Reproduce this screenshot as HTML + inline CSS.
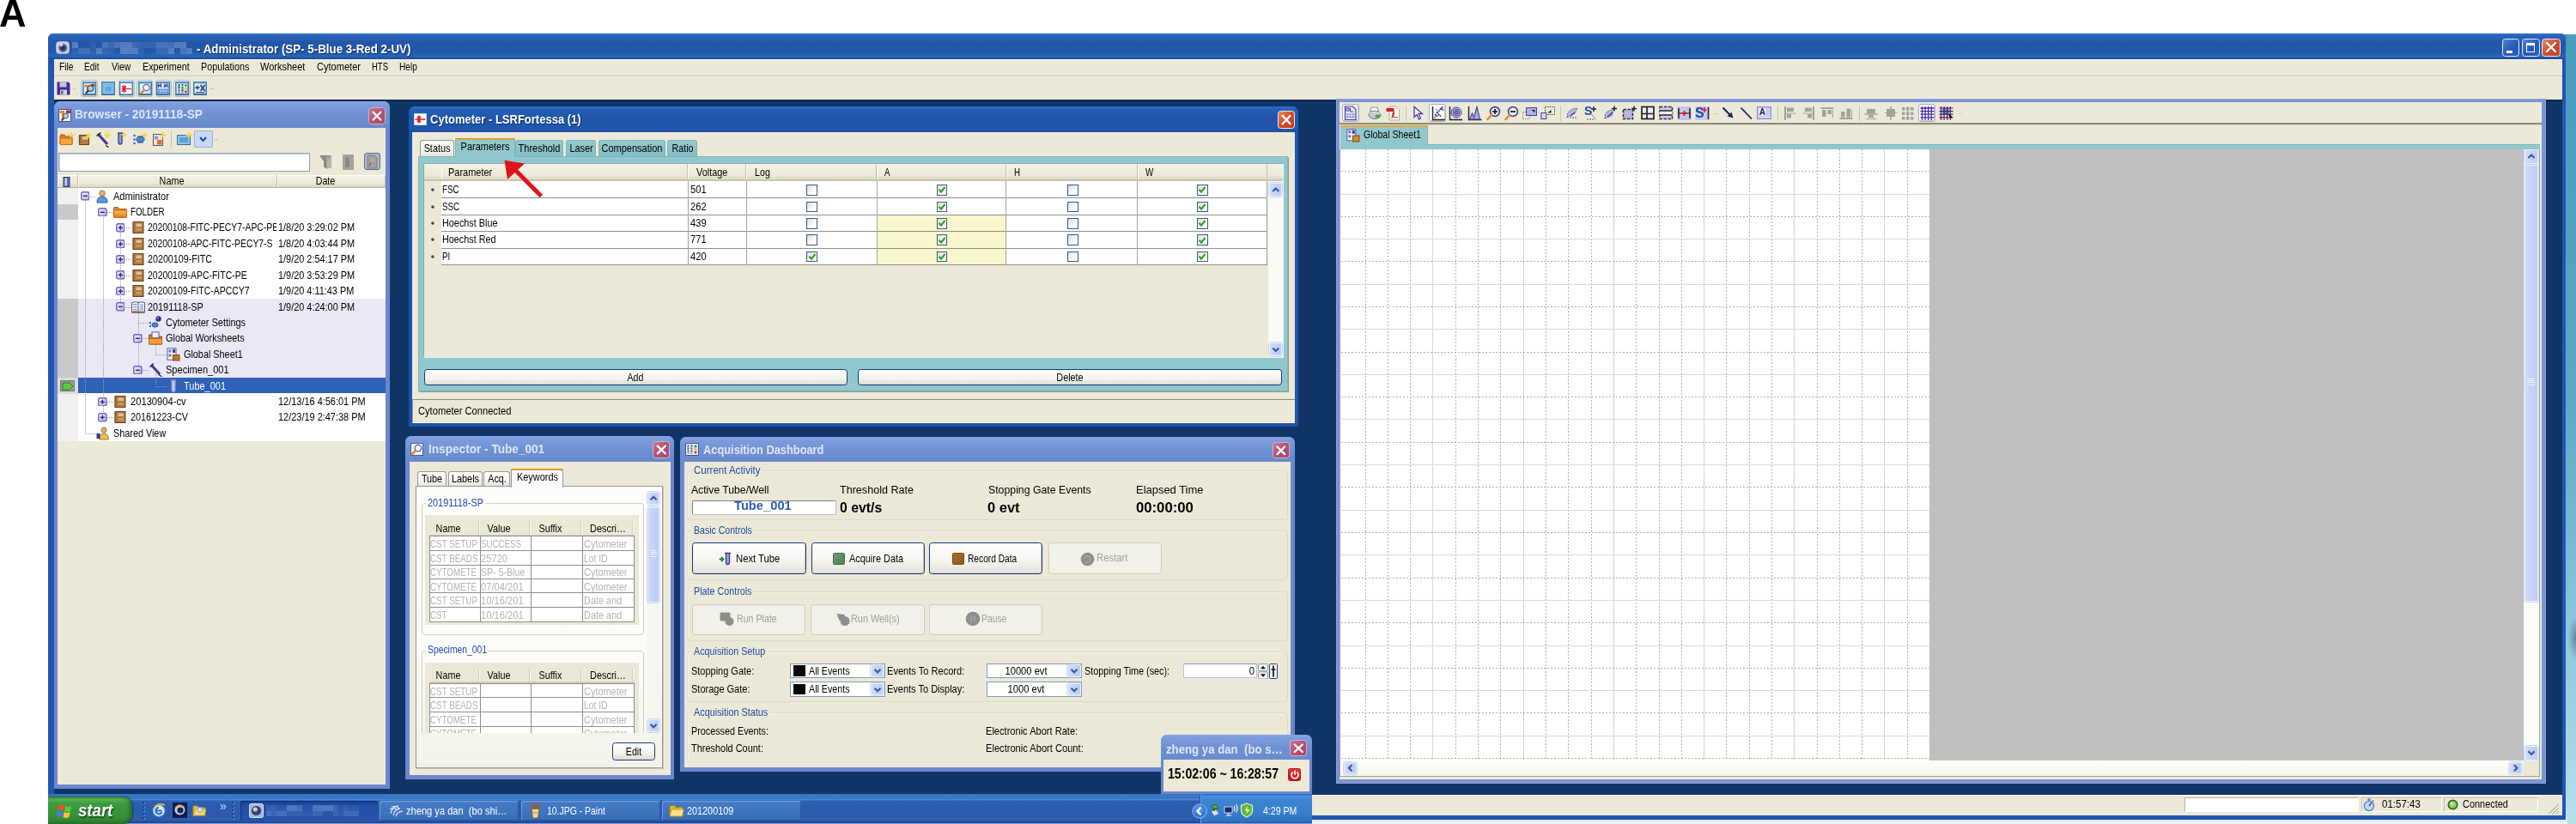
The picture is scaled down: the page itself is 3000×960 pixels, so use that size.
<!DOCTYPE html>
<html><head><meta charset="utf-8"><title>Figure A</title>
<style>
html,body{margin:0;padding:0;background:#fff;}
#root{position:relative;width:3000px;height:960px;overflow:hidden;transform:translateZ(0);font-family:"Liberation Sans",sans-serif;color:#000;}
#root div,#root span.t,#root svg{position:absolute;box-sizing:border-box;}
#root span.t{white-space:nowrap;}
.beige{background:#ece9d8;}
</style></head><body><div id="root">
<span class="t" style="top:-7.3px;font-size:45px;line-height:46.0px;font-weight:bold;left:-1.2px;transform:scaleX(0.97);transform-origin:0 50%;">A</span>
<div style="left:2984.0px;top:40.0px;width:16.0px;height:920.0px;background:linear-gradient(#4a9cbe 0%,#5aa7c6 45%,#8cc6dc 75%,#b9dfec 100%);"></div>
<div style="left:2991.0px;top:718.0px;width:9.0px;height:50.0px;background:radial-gradient(ellipse at 100% 50%,rgba(60,80,100,.55),rgba(60,80,100,0) 72%);"></div>
<div style="left:1528.0px;top:950.0px;width:1462.0px;height:10.0px;background:linear-gradient(#cfe3ee,#eef5f9);"></div>
<div style="left:56.0px;top:39.0px;width:2932.0px;height:915.5px;background:#2156b0;border-radius:6px 6px 0 0;"></div>
<div style="left:56.0px;top:39.0px;width:2932.0px;height:30.0px;border-radius:6px 6px 0 0;background:linear-gradient(#2f6fc6 0%,#2a65ba 10%,#2257a8 35%,#2358aa 70%,#2a66b6 88%,#1c4c98 100%);"></div>
<div style="left:65.0px;top:47.5px;width:16.0px;height:15.0px;border-radius:3.500px;background:radial-gradient(circle at 52% 52%,#20264e 0%,#39406c 30%,#8a92b4 48%,#d4d8e6 62%,#c2c8dc 100%);border:1px solid #9fb0d8;"></div>
<div style="left:69.0px;top:50.0px;width:5.0px;height:4.5px;border-radius:50%;background:radial-gradient(circle,#fff,rgba(255,255,255,0) 75%);"></div>
<div style="left:84.0px;top:48.5px;width:7.0px;height:7.3px;background:rgba(190,205,240,0.32);"></div>
<div style="left:84.0px;top:55.8px;width:7.0px;height:7.3px;background:rgba(190,205,240,0.08);"></div>
<div style="left:91.0px;top:48.5px;width:14.0px;height:7.3px;background:rgba(190,205,240,0);"></div>
<div style="left:91.0px;top:55.8px;width:14.0px;height:7.3px;background:rgba(190,205,240,0.2);"></div>
<div style="left:105.0px;top:48.5px;width:7.0px;height:7.3px;background:rgba(190,205,240,0.08);"></div>
<div style="left:105.0px;top:55.8px;width:7.0px;height:7.3px;background:rgba(190,205,240,0.08);"></div>
<div style="left:112.0px;top:48.5px;width:7.0px;height:7.3px;background:rgba(190,205,240,0);"></div>
<div style="left:112.0px;top:55.8px;width:7.0px;height:7.3px;background:rgba(190,205,240,0.32);"></div>
<div style="left:119.0px;top:48.5px;width:7.0px;height:7.3px;background:rgba(190,205,240,0.25);"></div>
<div style="left:119.0px;top:55.8px;width:7.0px;height:7.3px;background:rgba(190,205,240,0.12);"></div>
<div style="left:126.0px;top:48.5px;width:7.0px;height:7.3px;background:rgba(190,205,240,0.15);"></div>
<div style="left:126.0px;top:55.8px;width:7.0px;height:7.3px;background:rgba(190,205,240,0.08);"></div>
<div style="left:133.0px;top:48.5px;width:7.0px;height:7.3px;background:rgba(190,205,240,0.25);"></div>
<div style="left:133.0px;top:55.8px;width:7.0px;height:7.3px;background:rgba(190,205,240,0);"></div>
<div style="left:140.0px;top:48.5px;width:14.0px;height:7.3px;background:rgba(190,205,240,0.32);"></div>
<div style="left:140.0px;top:55.8px;width:14.0px;height:7.3px;background:rgba(190,205,240,0.32);"></div>
<div style="left:154.0px;top:48.5px;width:7.0px;height:7.3px;background:rgba(190,205,240,0.15);"></div>
<div style="left:154.0px;top:55.8px;width:7.0px;height:7.3px;background:rgba(190,205,240,0.32);"></div>
<div style="left:161.0px;top:48.5px;width:7.0px;height:7.3px;background:rgba(190,205,240,0.12);"></div>
<div style="left:161.0px;top:55.8px;width:7.0px;height:7.3px;background:rgba(190,205,240,0.08);"></div>
<div style="left:168.0px;top:48.5px;width:14.0px;height:7.3px;background:rgba(190,205,240,0.12);"></div>
<div style="left:168.0px;top:55.8px;width:14.0px;height:7.3px;background:rgba(190,205,240,0);"></div>
<div style="left:182.0px;top:48.5px;width:14.0px;height:7.3px;background:rgba(190,205,240,0.25);"></div>
<div style="left:182.0px;top:55.8px;width:14.0px;height:7.3px;background:rgba(190,205,240,0.15);"></div>
<div style="left:196.0px;top:48.5px;width:7.0px;height:7.3px;background:rgba(190,205,240,0.2);"></div>
<div style="left:196.0px;top:55.8px;width:7.0px;height:7.3px;background:rgba(190,205,240,0.32);"></div>
<div style="left:203.0px;top:48.5px;width:7.0px;height:7.3px;background:rgba(190,205,240,0.32);"></div>
<div style="left:203.0px;top:55.8px;width:7.0px;height:7.3px;background:rgba(190,205,240,0);"></div>
<div style="left:210.0px;top:48.5px;width:7.0px;height:7.3px;background:rgba(190,205,240,0.32);"></div>
<div style="left:210.0px;top:55.8px;width:7.0px;height:7.3px;background:rgba(190,205,240,0.25);"></div>
<div style="left:217.0px;top:48.5px;width:7.0px;height:7.3px;background:rgba(190,205,240,0);"></div>
<div style="left:217.0px;top:55.8px;width:7.0px;height:7.3px;background:rgba(190,205,240,0.32);"></div>
<span class="t" style="top:46.8px;font-size:15px;line-height:19.0px;color:#fff;font-weight:bold;left:229.2px;transform:scaleX(0.89);transform-origin:0 50%;text-shadow:1px 1px 1px #0a2a66;">- Administrator (SP- 5-Blue 3-Red 2-UV)</span>
<div style="left:2913.6px;top:44.6px;width:20.8px;height:21.2px;border:1px solid #e6ecf8;border-radius:3.5px;background:linear-gradient(135deg,#4d83d8,#2458b4 60%,#2a62c0);"></div>
<div style="left:2918.6px;top:59.0px;width:7.5px;height:3.0px;background:#fff;"></div>
<div style="left:2936.8px;top:44.6px;width:21.2px;height:21.2px;border:1px solid #e6ecf8;border-radius:3.5px;background:linear-gradient(135deg,#4d83d8,#2458b4 60%,#2a62c0);"></div>
<div style="left:2942.3px;top:50.0px;width:10.2px;height:10.5px;border:1.5px solid #fff;border-top-width:3px;"></div>
<div style="left:2960.3px;top:44.6px;width:21.5px;height:21.2px;border:1px solid #e6ecf8;border-radius:3.5px;background:linear-gradient(135deg,#e88a6a,#cf4a28 55%,#c2401f);"></div>
<svg style="left:2964.3px;top:48.2px" width="14" height="14" viewBox="0 0 14 14"><path d="M2 2L12 12M12 2L2 12" stroke="#fff" stroke-width="2.4" stroke-linecap="round"/></svg>
<div style="left:63.0px;top:69.0px;width:2920.5px;height:47.0px;background:#ece9d8;"></div>
<div style="left:63.0px;top:69.0px;width:2920.5px;height:1.0px;background:#f8f7f0;"></div>
<div style="left:63.0px;top:88.0px;width:2920.5px;height:1.0px;background:#c9c6b6;"></div>
<div style="left:63.0px;top:89.0px;width:2920.5px;height:1.0px;background:#f6f5ee;"></div>
<span class="t" style="top:70.0px;font-size:12.6px;line-height:16.6px;left:68.5px;transform:scaleX(0.813);transform-origin:0 50%;">File</span>
<span class="t" style="top:70.0px;font-size:12.6px;line-height:16.6px;left:98.2px;transform:scaleX(0.806);transform-origin:0 50%;">Edit</span>
<span class="t" style="top:70.0px;font-size:12.6px;line-height:16.6px;left:129.9px;transform:scaleX(0.823);transform-origin:0 50%;">View</span>
<span class="t" style="top:70.0px;font-size:12.6px;line-height:16.6px;left:165.8px;transform:scaleX(0.858);transform-origin:0 50%;">Experiment</span>
<span class="t" style="top:70.0px;font-size:12.6px;line-height:16.6px;left:234.1px;transform:scaleX(0.855);transform-origin:0 50%;">Populations</span>
<span class="t" style="top:70.0px;font-size:12.6px;line-height:16.6px;left:303.0px;transform:scaleX(0.874);transform-origin:0 50%;">Worksheet</span>
<span class="t" style="top:70.0px;font-size:12.6px;line-height:16.6px;left:369.4px;transform:scaleX(0.878);transform-origin:0 50%;">Cytometer</span>
<span class="t" style="top:70.0px;font-size:12.6px;line-height:16.6px;left:433.4px;transform:scaleX(0.754);transform-origin:0 50%;">HTS</span>
<span class="t" style="top:70.0px;font-size:12.6px;line-height:16.6px;left:465.0px;transform:scaleX(0.803);transform-origin:0 50%;">Help</span>
<svg style="left:66.0px;top:95.0px" width="16" height="16" viewBox="0 0 16 16"><path d="M0.5 0.5h13l2 2v13h-15z" fill="#4b2c8e"/><rect x="3.5" y="0.5" width="8" height="6" fill="#b8c6ee"/><rect x="4" y="9.5" width="8" height="6" fill="#d8d4cc"/><rect x="5" y="10.5" width="2.5" height="4" fill="#6a5aa0"/></svg>
<div style="left:94.3px;top:93.2px;width:19.5px;height:19.8px;border:1px solid #a9b9d6;border-radius:3px;background:#fbfaf6;box-shadow:inset -1px -1px 0 #d4d1c2;"></div>
<svg style="left:96.0px;top:95.1px" width="16" height="16" viewBox="0 0 16 16"><defs><linearGradient id="ig" x1="0" y1="0" x2="1" y2="1"><stop offset="0" stop-color="#f2f9fd"/><stop offset="1" stop-color="#bfdcf0"/></linearGradient></defs><rect x="0.800" y="0.800" width="14.400" height="14.400" fill="url(#ig)" stroke="#3f7fae" stroke-width="1.600"/><path d="M0.800 1.600h14.400" stroke="#5fa0cc" stroke-width="1.600"/><path d="M0.800 15.200h14.400" stroke="#2c5f8c" stroke-width="1.200"/><path d="M2.500 4h5v8.500h-2.500v-6h-2.500z" fill="#e8851a"/><circle cx="9.300" cy="8" r="3.300" fill="#9fd0f2" stroke="#3c4878" stroke-width="1.200"/><path d="M7 10.500l-3.200 3.300" stroke="#4a2c10" stroke-width="2"/><rect x="10" y="3" width="4" height="2.600" fill="#c02818"/></svg>
<svg style="left:118.0px;top:95.1px" width="16" height="16" viewBox="0 0 16 16"><defs><linearGradient id="ig" x1="0" y1="0" x2="1" y2="1"><stop offset="0" stop-color="#f2f9fd"/><stop offset="1" stop-color="#bfdcf0"/></linearGradient></defs><rect x="0.800" y="0.800" width="14.400" height="14.400" fill="url(#ig)" stroke="#3f7fae" stroke-width="1.600"/><path d="M0.800 1.600h14.400" stroke="#5fa0cc" stroke-width="1.600"/><path d="M0.800 15.200h14.400" stroke="#2c5f8c" stroke-width="1.200"/><rect x="1.600" y="2.400" width="12.800" height="12" fill="#74b6e4"/><rect x="3.500" y="5" width="9" height="7" fill="#62a8dc" stroke="#b4dcf6" stroke-width=".9" stroke-dasharray="1.200 1"/></svg>
<div style="left:138.0px;top:93.2px;width:18.6px;height:19.8px;border:1px solid #a9b9d6;border-radius:3px;background:#fbfaf6;box-shadow:inset -1px -1px 0 #d4d1c2;"></div>
<svg style="left:139.3px;top:95.1px" width="16" height="16" viewBox="0 0 16 16"><defs><linearGradient id="ig" x1="0" y1="0" x2="1" y2="1"><stop offset="0" stop-color="#f2f9fd"/><stop offset="1" stop-color="#bfdcf0"/></linearGradient></defs><rect x="0.800" y="0.800" width="14.400" height="14.400" fill="url(#ig)" stroke="#3f7fae" stroke-width="1.600"/><path d="M0.800 1.600h14.400" stroke="#5fa0cc" stroke-width="1.600"/><path d="M0.800 15.200h14.400" stroke="#2c5f8c" stroke-width="1.200"/><rect x="1.600" y="2.400" width="12.800" height="12" fill="#fbfdff"/><path d="M2.500 8.500h11.500" stroke="#e01828" stroke-width="1.200"/><path d="M3 5l5 7M8 5l-5 7M5.500 4v9" stroke="#e01828" stroke-width="1.300"/></svg>
<div style="left:159.4px;top:93.2px;width:18.6px;height:19.8px;border:1px solid #a9b9d6;border-radius:3px;background:#fbfaf6;box-shadow:inset -1px -1px 0 #d4d1c2;"></div>
<svg style="left:160.7px;top:95.1px" width="16" height="16" viewBox="0 0 16 16"><defs><linearGradient id="ig" x1="0" y1="0" x2="1" y2="1"><stop offset="0" stop-color="#f2f9fd"/><stop offset="1" stop-color="#bfdcf0"/></linearGradient></defs><rect x="0.800" y="0.800" width="14.400" height="14.400" fill="url(#ig)" stroke="#3f7fae" stroke-width="1.600"/><path d="M0.800 1.600h14.400" stroke="#5fa0cc" stroke-width="1.600"/><path d="M0.800 15.200h14.400" stroke="#2c5f8c" stroke-width="1.200"/><circle cx="9.500" cy="7" r="3.700" fill="#f8fbff" stroke="#5a66a8" stroke-width="1.200"/><path d="M7 9.800l-3.800 3.800" stroke="#d8861c" stroke-width="2.400" stroke-linecap="round"/></svg>
<div style="left:180.7px;top:93.2px;width:19.5px;height:19.8px;border:1px solid #a9b9d6;border-radius:3px;background:#fbfaf6;box-shadow:inset -1px -1px 0 #d4d1c2;"></div>
<svg style="left:182.4px;top:95.1px" width="16" height="16" viewBox="0 0 16 16"><defs><linearGradient id="ig" x1="0" y1="0" x2="1" y2="1"><stop offset="0" stop-color="#f2f9fd"/><stop offset="1" stop-color="#bfdcf0"/></linearGradient></defs><rect x="0.800" y="0.800" width="14.400" height="14.400" fill="url(#ig)" stroke="#3f7fae" stroke-width="1.600"/><path d="M0.800 1.600h14.400" stroke="#5fa0cc" stroke-width="1.600"/><path d="M0.800 15.200h14.400" stroke="#2c5f8c" stroke-width="1.200"/><path d="M2.500 7v-3.500l1.500 2 1-2.500 1 4M9 7l1-3.500 1 2.500 1.500-3 1 4" stroke="#4a3a9a" stroke-width="1.100" fill="none"/><rect x="2" y="8.500" width="12" height="5.200" fill="#4f86d4"/><path d="M2 11h12" stroke="#cfe0fa" stroke-width=".8"/><path d="M5 8.500v5.200M8 8.500v5.200M11 8.500v5.200" stroke="#cfe0fa" stroke-width=".8"/></svg>
<div style="left:202.2px;top:93.2px;width:19.4px;height:19.8px;border:1px solid #a9b9d6;border-radius:3px;background:#fbfaf6;box-shadow:inset -1px -1px 0 #d4d1c2;"></div>
<svg style="left:203.9px;top:95.1px" width="16" height="16" viewBox="0 0 16 16"><defs><linearGradient id="ig" x1="0" y1="0" x2="1" y2="1"><stop offset="0" stop-color="#f2f9fd"/><stop offset="1" stop-color="#bfdcf0"/></linearGradient></defs><rect x="0.800" y="0.800" width="14.400" height="14.400" fill="url(#ig)" stroke="#3f7fae" stroke-width="1.600"/><path d="M0.800 1.600h14.400" stroke="#5fa0cc" stroke-width="1.600"/><path d="M0.800 15.200h14.400" stroke="#2c5f8c" stroke-width="1.200"/><path d="M4.500 3v10.500M8.500 3v10.500" stroke="#2e3a7a" stroke-width="1.800" stroke-dasharray="2.200 1"/><circle cx="4.500" cy="6" r="1.300" fill="#3a9a3a"/><circle cx="8.500" cy="10" r="1.300" fill="#3a9a3a"/><circle cx="12.300" cy="4.500" r="1.300" fill="#2a9a2a"/><circle cx="12.300" cy="8.200" r="1.300" fill="#e8c010"/><circle cx="12.300" cy="11.900" r="1.300" fill="#d02818"/></svg>
<svg style="left:224.6px;top:95.1px" width="16" height="16" viewBox="0 0 16 16"><defs><linearGradient id="ig" x1="0" y1="0" x2="1" y2="1"><stop offset="0" stop-color="#f2f9fd"/><stop offset="1" stop-color="#bfdcf0"/></linearGradient></defs><rect x="0.800" y="0.800" width="14.400" height="14.400" fill="url(#ig)" stroke="#3f7fae" stroke-width="1.600"/><path d="M0.800 1.600h14.400" stroke="#5fa0cc" stroke-width="1.600"/><path d="M0.800 15.200h14.400" stroke="#2c5f8c" stroke-width="1.200"/><path d="M2.500 7h5M5 4.500v5" stroke="#26327e" stroke-width="1.300"/><path d="M8.500 4l5 7M13.500 4l-5 7" stroke="#26327e" stroke-width="1.500"/><path d="M3 12.800h10" stroke="#26327e" stroke-width="1.100"/></svg>
<div style="left:84.5px;top:102.5px;width:3.0px;height:1.0px;background:#c6c3b2;"></div>
<div style="left:244.0px;top:102.5px;width:5.0px;height:1.0px;background:#c6c3b2;"></div>
<div style="left:63.0px;top:116.0px;width:2920.5px;height:810.0px;background:#0f3566;"></div>
<div style="left:63.0px;top:116.0px;width:2920.5px;height:2.0px;background:#0a2850;"></div>
<div style="left:1528.0px;top:925.5px;width:1455.5px;height:24.5px;background:#ece9d8;"></div>
<div style="left:1528.0px;top:925.5px;width:1455.5px;height:1.0px;background:#f8f7f0;"></div>
<div style="left:2543.8px;top:928.7px;width:202.8px;height:17.8px;background:#fff;border:1px solid #b5b2a2;border-right-color:#fff;border-bottom-color:#fff;"></div>
<div style="left:2749.8px;top:928.7px;width:94.6px;height:17.8px;border:1px solid #c5c2b2;border-right-color:#fff;border-bottom-color:#fff;"></div>
<div style="left:2846.4px;top:928.7px;width:109.6px;height:17.8px;border:1px solid #c5c2b2;border-right-color:#fff;border-bottom-color:#fff;"></div>
<svg style="left:2751.0px;top:929.0px" width="16" height="17" viewBox="0 0 16 17"><circle cx="8" cy="10" r="5.6" fill="#bcd8f0" stroke="#5a86c0" stroke-width="1.4"/><path d="M8 10l3-4" stroke="#2a4a90" stroke-width="1.3"/><rect x="6.5" y="1.2" width="3" height="2.6" fill="#5a86c0"/><path d="M11.5 3.5l2 1.6" stroke="#5a86c0" stroke-width="1.4"/></svg>
<span class="t" style="top:929.1px;font-size:12.6px;line-height:16.6px;left:2773.5px;transform:scaleX(0.916);transform-origin:0 50%;">01:57:43</span>
<svg style="left:2849.5px;top:931.3px" width="13" height="13" viewBox="0 0 13 13"><circle cx="6.5" cy="6.5" r="5.2" fill="#8fd060" stroke="#2d6a22" stroke-width="1.7"/><circle cx="5.5" cy="5.2" r="2" fill="#c6ee9c"/></svg>
<span class="t" style="top:929.1px;font-size:12.6px;line-height:16.6px;left:2867.5px;transform:scaleX(0.868);transform-origin:0 50%;">Connected</span>
<svg style="left:2966.0px;top:934.0px" width="15" height="15" viewBox="0 0 15 15"><path d="M14 3L3 14M14 7L7 14M14 11L11 14" stroke="#b8b5a4" stroke-width="1.4"/><path d="M15 4L4 15M15 8L8 15M15 12L12 15" stroke="#fff" stroke-width="1"/></svg>
<div style="left:56.0px;top:925.0px;width:1472.0px;height:35.0px;background:linear-gradient(#3a74c0 0%,#3b78c4 8%,#3572be 13%,#4a8ad2 18%,#2c60b2 24%,#2a5aac 50%,#2b5cae 88%,#1e488f 94%,#1e488f 96%,#809be0 97%,#809be0 100%);"></div>
<div style="left:56.0px;top:927.5px;width:97.8px;height:32.5px;border-radius:0 11px 11px 0;background:linear-gradient(#2f8a36 0%,#58b358 10%,#3d9a3f 25%,#37933a 70%,#2c7c30 100%);box-shadow:inset -3px 0 4px rgba(20,70,20,.55),1px 0 2px rgba(10,30,90,.6);"></div>
<svg style="left:66.0px;top:934.0px" width="20" height="20" viewBox="0 0 20 20"><path d="M2 4.5q3.5-2 7 0l-1.3 6q-3.5-2-7 0z" fill="#e8502a"/><path d="M10.3 4.8q3.5 2 7 0l-1.3 6q-3.5 2-7 0z" fill="#6cc04a"/><path d="M0.5 11.8q3.5-2 7 0l-1.3 6q-3.5-2-7 0z" fill="#4a7be0"/><path d="M8.7 12.1q3.5 2 7 0l-1.3 6q-3.5 2-7 0z" fill="#f4c22a"/></svg>
<span class="t" style="top:933.0px;font-size:20px;line-height:22.0px;color:#fff;font-weight:bold;font-style:italic;left:90.5px;transform:scaleX(0.93);transform-origin:0 50%;text-shadow:1px 1.5px 1.5px #1d4a1d;">start</span>
<div style="left:166.0px;top:934.0px;width:2.0px;height:2.0px;background:#163f94;box-shadow:1px 1px 0 #5b8ae0;"></div>
<div style="left:166.0px;top:938.6px;width:2.0px;height:2.0px;background:#163f94;box-shadow:1px 1px 0 #5b8ae0;"></div>
<div style="left:166.0px;top:943.2px;width:2.0px;height:2.0px;background:#163f94;box-shadow:1px 1px 0 #5b8ae0;"></div>
<div style="left:166.0px;top:947.8px;width:2.0px;height:2.0px;background:#163f94;box-shadow:1px 1px 0 #5b8ae0;"></div>
<div style="left:166.0px;top:952.4px;width:2.0px;height:2.0px;background:#163f94;box-shadow:1px 1px 0 #5b8ae0;"></div>
<div style="left:270.0px;top:934.0px;width:2.0px;height:2.0px;background:#163f94;box-shadow:1px 1px 0 #5b8ae0;"></div>
<div style="left:270.0px;top:938.6px;width:2.0px;height:2.0px;background:#163f94;box-shadow:1px 1px 0 #5b8ae0;"></div>
<div style="left:270.0px;top:943.2px;width:2.0px;height:2.0px;background:#163f94;box-shadow:1px 1px 0 #5b8ae0;"></div>
<div style="left:270.0px;top:947.8px;width:2.0px;height:2.0px;background:#163f94;box-shadow:1px 1px 0 #5b8ae0;"></div>
<div style="left:270.0px;top:952.4px;width:2.0px;height:2.0px;background:#163f94;box-shadow:1px 1px 0 #5b8ae0;"></div>
<svg style="left:177.0px;top:935.0px" width="17" height="18" viewBox="0 0 17 18"><circle cx="8" cy="9.5" r="6.6" fill="#d8ecfa" stroke="#8fb8e8" stroke-width="1.2"/><path d="M4.5 9.5h7M8 6a3.6 3.6 0 1 0 3.4 4.8" stroke="#2a6fc8" stroke-width="2" fill="none"/><path d="M3 5q5-5 12-2" stroke="#e8b030" stroke-width="1.6" fill="none"/></svg>
<div style="left:200.5px;top:934.5px;width:17.0px;height:18.0px;background:#0c1c50;"></div>
<svg style="left:202.0px;top:936.0px" width="15" height="15" viewBox="0 0 15 15"><circle cx="7.5" cy="7.5" r="6" fill="#c8ccd8"/><circle cx="8" cy="8" r="3.6" fill="#1a2050"/><path d="M3 4q4-4 9 0" stroke="#e89030" stroke-width="1.6" fill="none"/></svg>
<svg style="left:224.0px;top:935.0px" width="17" height="17" viewBox="0 0 17 17"><path d="M1 4h5l1.5 2H15v9H1z" fill="#f0c040" stroke="#b88a18"/><path d="M3 8h13l-2 7H1z" fill="#f8dc78" stroke="#c89a20"/><circle cx="9" cy="8.5" r="3" fill="#cfe4f4" stroke="#7a9ac0"/></svg>
<span class="t" style="top:931.5px;font-size:14px;line-height:14.0px;color:#d6e2fa;left:256.0px;transform:scaleX(1);transform-origin:0 50%;">»</span>
<div style="left:279.7px;top:933.0px;width:160.6px;height:23.2px;border-radius:3px;background:linear-gradient(#1b4090,#2250a6 30%,#2554aa);box-shadow:inset 1px 1px 2px #0f2f78;"></div>
<svg style="left:290.0px;top:936.0px" width="17" height="17" viewBox="0 0 17 17"><rect x="0.5" y="0.5" width="16" height="16" rx="2" fill="#aab4d8" stroke="#dfe6f8"/><circle cx="8.5" cy="8.5" r="5.6" fill="#3a4070"/><circle cx="7.2" cy="7" r="2.6" fill="#c8cce0"/></svg>
<div style="left:310.0px;top:938.0px;width:6.0px;height:6.5px;background:rgba(150,180,240,0.15);"></div>
<div style="left:310.0px;top:944.5px;width:6.0px;height:6.5px;background:rgba(150,180,240,0.3);"></div>
<div style="left:316.0px;top:938.0px;width:6.0px;height:6.5px;background:rgba(150,180,240,0.2);"></div>
<div style="left:316.0px;top:944.5px;width:6.0px;height:6.5px;background:rgba(150,180,240,0.2);"></div>
<div style="left:322.0px;top:938.0px;width:12.0px;height:6.5px;background:rgba(150,180,240,0.1);"></div>
<div style="left:322.0px;top:944.5px;width:12.0px;height:6.5px;background:rgba(150,180,240,0.3);"></div>
<div style="left:334.0px;top:938.0px;width:12.0px;height:6.5px;background:rgba(150,180,240,0.38);"></div>
<div style="left:334.0px;top:944.5px;width:12.0px;height:6.5px;background:rgba(150,180,240,0.15);"></div>
<div style="left:346.0px;top:938.0px;width:6.0px;height:6.5px;background:rgba(150,180,240,0.3);"></div>
<div style="left:346.0px;top:944.5px;width:6.0px;height:6.5px;background:rgba(150,180,240,0.15);"></div>
<div style="left:352.0px;top:938.0px;width:12.0px;height:6.5px;background:rgba(150,180,240,0.05);"></div>
<div style="left:352.0px;top:944.5px;width:12.0px;height:6.5px;background:rgba(150,180,240,0.1);"></div>
<div style="left:364.0px;top:938.0px;width:12.0px;height:6.5px;background:rgba(150,180,240,0.38);"></div>
<div style="left:364.0px;top:944.5px;width:12.0px;height:6.5px;background:rgba(150,180,240,0.2);"></div>
<div style="left:376.0px;top:938.0px;width:12.0px;height:6.5px;background:rgba(150,180,240,0.38);"></div>
<div style="left:376.0px;top:944.5px;width:12.0px;height:6.5px;background:rgba(150,180,240,0.05);"></div>
<div style="left:388.0px;top:938.0px;width:6.0px;height:6.5px;background:rgba(150,180,240,0.2);"></div>
<div style="left:388.0px;top:944.5px;width:6.0px;height:6.5px;background:rgba(150,180,240,0.2);"></div>
<div style="left:394.0px;top:938.0px;width:6.0px;height:6.5px;background:rgba(150,180,240,0.1);"></div>
<div style="left:394.0px;top:944.5px;width:6.0px;height:6.5px;background:rgba(150,180,240,0.1);"></div>
<div style="left:400.0px;top:938.0px;width:6.0px;height:6.5px;background:rgba(150,180,240,0.15);"></div>
<div style="left:400.0px;top:944.5px;width:6.0px;height:6.5px;background:rgba(150,180,240,0.25);"></div>
<div style="left:406.0px;top:938.0px;width:12.0px;height:6.5px;background:rgba(150,180,240,0.1);"></div>
<div style="left:406.0px;top:944.5px;width:12.0px;height:6.5px;background:rgba(150,180,240,0.25);"></div>
<div style="left:441.5px;top:933.0px;width:162.5px;height:23.2px;border-radius:3px;background:linear-gradient(#5b8bd2 0%,#4178c2 14%,#3e75bd 60%,#386cb6 100%);box-shadow:inset 1px 1px 0 #6f9ade,inset -1px -1px 0 #2a56a6;"></div>
<svg style="left:452.0px;top:936.0px" width="19" height="17" viewBox="0 0 19 17"><path d="M3 12q2-9 9-9M6 14q1-7 8-8M9 15q1-5 8-6M2 7q4-3 8 0M4 4q5-2 9 2" stroke="#cfe0fa" stroke-width="1.3" fill="none"/></svg>
<span class="t" style="top:936.5px;font-size:12.6px;line-height:16.6px;color:#fff;left:472.7px;transform:scaleX(0.882);transform-origin:0 50%;">zheng ya dan&nbsp; (bo shi…</span>
<div style="left:606.6px;top:933.0px;width:162.1px;height:23.2px;border-radius:3px;background:linear-gradient(#5b8bd2 0%,#4178c2 14%,#3e75bd 60%,#386cb6 100%);box-shadow:inset 1px 1px 0 #6f9ade,inset -1px -1px 0 #2a56a6;"></div>
<svg style="left:616.0px;top:935.0px" width="15" height="19" viewBox="0 0 15 19"><path d="M3 7l1.5 11h6L12 7z" fill="#e8d8b0" stroke="#8a6a30"/><path d="M4.5 8L3 1M7.5 8V0.5M10.5 8L12 1" stroke="#d04020" stroke-width="1.6"/><path d="M6 8L5 2M9 8l1-6" stroke="#2a8a30" stroke-width="1.4"/><path d="M4 12h7" stroke="#d8a020" stroke-width="1.5"/></svg>
<span class="t" style="top:936.5px;font-size:12.6px;line-height:16.6px;color:#fff;left:636.7px;transform:scaleX(0.829);transform-origin:0 50%;">10.JPG - Paint</span>
<div style="left:771.0px;top:933.0px;width:162.0px;height:23.2px;border-radius:3px;background:linear-gradient(#5b8bd2 0%,#4178c2 14%,#3e75bd 60%,#386cb6 100%);box-shadow:inset 1px 1px 0 #6f9ade,inset -1px -1px 0 #2a56a6;"></div>
<svg style="left:779.0px;top:936.0px" width="18" height="16" viewBox="0 0 18 16"><path d="M1 2.5h5.5l1.5 2H16v10.5H1z" fill="#e8b830" stroke="#a87a10"/><path d="M3 7h14.5l-2 8H1z" fill="#fbe48a" stroke="#c09018"/></svg>
<span class="t" style="top:936.5px;font-size:12.6px;line-height:16.6px;color:#fff;left:799.8px;transform:scaleX(0.861);transform-origin:0 50%;">201200109</span>
<div style="left:1396.5px;top:925.0px;width:131.5px;height:33.6px;background:linear-gradient(#2a6ac0 0%,#4c96de 9%,#3a84d2 18%,#3880ce 55%,#2f74c2 92%,#245aa0 100%);border-left:1px solid #1a4aa0;box-shadow:inset 1px 0 0 #5fa6ee;"></div>
<svg style="left:1387.5px;top:935.5px" width="18" height="18" viewBox="0 0 18 18"><circle cx="9" cy="9" r="8.2" fill="#3a78d8" stroke="#8fbcf4" stroke-width="1"/><circle cx="8" cy="7" r="5.5" fill="#5a98ea" opacity=".7"/><path d="M10.5 4.8L6.5 9l4 4.2" stroke="#fff" stroke-width="2.3" fill="none"/></svg>
<svg style="left:1408.0px;top:936.0px" width="14" height="17" viewBox="0 0 14 17"><path d="M2 9l6-2 4 5-6 3z" fill="#d8e0ec" stroke="#5a6a90"/><path d="M3 3l5-2 3 4-5 2z" fill="#4fae3a" stroke="#2a6a20"/><path d="M6 5v4" stroke="#2a6a20" stroke-width="1.5"/></svg>
<svg style="left:1425.0px;top:935.0px" width="18" height="17" viewBox="0 0 18 17"><rect x="1" y="5" width="9" height="7" fill="#1a2a70" stroke="#c8d4f0"/><path d="M3 15h6M5.5 12v3" stroke="#c8d4f0" stroke-width="1.5"/><path d="M12 4q2 3 0 6M14.5 2.500q3 4.500 0 9" stroke="#e8eefc" stroke-width="1.3" fill="none"/></svg>
<svg style="left:1444.0px;top:935.0px" width="16" height="18" viewBox="0 0 16 18"><path d="M8 1l6.500 2.500v6q0 5-6.500 7.500q-6.500-2.500-6.500-7.500v-6z" fill="#5ab840" stroke="#e8e8c0" stroke-width="1.3"/><path d="M9 4L5.5 9.500h3L7 14l4.500-6h-3z" fill="#fff8c0"/></svg>
<span class="t" style="top:936.5px;font-size:12.6px;line-height:16.6px;color:#fff;left:1470.7px;transform:scaleX(0.838);transform-origin:0 50%;">4:29 PM</span>
<div style="left:62.7px;top:117.8px;width:391.7px;height:801.4px;background:#6c87ce;border-radius:7px 7px 0 0;"></div>
<div style="left:62.7px;top:117.8px;width:391.7px;height:30.7px;border-radius:7px 7px 0 0;background:linear-gradient(#86a6e2 0%,#7c9cdc 12%,#7092d4 50%,#6c8cd0 85%,#6a88cc 100%);"></div>
<div style="left:66.7px;top:148.5px;width:381.9px;height:765.7px;background:#ece9d8;"></div>
<svg style="left:68.0px;top:126.5px" width="15" height="15" viewBox="0 0 15 15"><rect x="0.5" y="0.5" width="14" height="14" fill="#f4f6fc" stroke="#3a5a90"/><path d="M1.5 2h5.500v10h-3v-7h-2.500z" fill="#e8871a"/><circle cx="8.500" cy="8" r="3" fill="#a8d0f0" stroke="#44507a"/><path d="M6.500 10.500l-3 3" stroke="#5a3410" stroke-width="1.8"/><rect x="9" y="1.500" width="5" height="3.500" fill="#c02818"/></svg>
<span class="t" style="top:124.2px;font-size:14.5px;line-height:18.5px;color:#dde7fa;font-weight:bold;left:87.0px;transform:scaleX(0.943);transform-origin:0 50%;">Browser - 20191118-SP</span>
<div style="left:428.7px;top:124.9px;width:19.9px;height:20.2px;border:1px solid #c9b4d4;border-radius:3.5px;background:linear-gradient(135deg,#c8788e,#b85070 50%,#ae4868);"></div>
<svg style="left:428.7px;top:124.9px" width="19.9" height="20.2" viewBox="0 0 19.9 20.2"><path d="M5.6 5.7L14.3 14.5M14.3 5.7L5.6 14.5" stroke="#fff" stroke-width="2.3" stroke-linecap="round"/></svg>
<svg style="left:69.0px;top:154.0px" width="18" height="16" viewBox="0 0 18 16"><path d="M1 4q0-1 1-1h4l1.500 2H14q1 0 1 1v7.500q0 1-1 1H2q-1 0-1-1z" fill="#e07818" stroke="#b85a10"/><path d="M1 8q0-1 1-1h12q1 0 1 1v5.500q0 1-1 1H2q-1 0-1-1z" fill="#f6a838" stroke="#c87018"/><path d="M13.500 0l1.200 2.600 2.800.9-2.800.9-1.200 2.600-1.200-2.600-2.800-.9 2.800-.9z" fill="#f6e23a" stroke="#e8c020" stroke-width=".4"/></svg>
<svg style="left:91.0px;top:155.0px" width="15" height="15" viewBox="0 0 15 15"><rect x="1.500" y="2.500" width="11" height="11" fill="#b87840" stroke="#6a4018"/><path d="M0.500 4.500h3M0.500 7.500h3M0.500 10.500h3" stroke="#555" stroke-width="1.200"/><rect x="5" y="4.500" width="6" height="3" fill="#e8d0a0"/><path d="M11.800 0l1.200 2.500 2.500.9-2.500.9-1.200 2.500-1.200-2.500-2.500-.9 2.500-.9z" fill="#f6e23a" stroke="#e8c020" stroke-width=".4"/></svg>
<svg style="left:111.0px;top:153.5px" width="18" height="18" viewBox="0 0 18 18"><path d="M3 2l11 12" stroke="#4a3a8a" stroke-width="3.200"/><path d="M1.500 4.500l5-4M12 15.500l3.500 2" stroke="#222" stroke-width="1.400"/><path d="M14 0l1.200 2.600 2.700.9-2.700.9-1.200 2.600-1.200-2.600-2.700-.9 2.700-.9z" fill="#f6e23a" stroke="#e8c020" stroke-width=".4"/></svg>
<svg style="left:135.0px;top:154.0px" width="12" height="17" viewBox="0 0 12 17"><path d="M2 1h6M3 1.500v10.500a2 2 0 0 0 4 0V1.500" fill="#8f9fe0" stroke="#3a3a8a" stroke-width="1.300"/><path d="M9 0l1 2.300 2 .8-2 .8-1 2.300-1-2.300-2.300-.8 2.300-.8z" fill="#f6e23a" stroke="#e8c020" stroke-width=".4"/></svg>
<svg style="left:154.0px;top:154.0px" width="18" height="17" viewBox="0 0 18 17"><circle cx="2.500" cy="4" r="1.300" fill="#3a6ac8"/><circle cx="2.500" cy="8.500" r="1.300" fill="#3a6ac8"/><circle cx="2.500" cy="13" r="1.300" fill="#3a6ac8"/><ellipse cx="9.500" cy="8.500" rx="4.500" ry="3" fill="#4a8ad8" stroke="#2a4a90"/><path d="M6 5l7 0M6 12h7" stroke="#2a4a90"/><path d="M14.300 0l1.100 2.500 2.500.9-2.500.9-1.100 2.500-1.100-2.500-2.500-.9 2.500-.9z" fill="#f6e23a" stroke="#e8c020" stroke-width=".4"/></svg>
<svg style="left:177.0px;top:154.0px" width="16" height="17" viewBox="0 0 16 17"><rect x="1.500" y="2.500" width="11" height="13" fill="#e8e4dc" stroke="#6a5a4a"/><rect x="3" y="4.500" width="4" height="4" fill="#8a9ad8"/><rect x="6" y="9" width="5.500" height="5.500" fill="#c87830"/><path d="M12.800 0l1.100 2.500 2.100.9-2.100.9-1.100 2.500-1.100-2.500-2.500-.9 2.500-.9z" fill="#f6e23a" stroke="#e8c020" stroke-width=".4"/></svg>
<div style="left:199.2px;top:152.5px;width:1.0px;height:19.0px;background:#c6c3b2;"></div>
<svg style="left:206.0px;top:154.0px" width="18" height="16" viewBox="0 0 18 16"><rect x="0.500" y="3.500" width="15" height="11" fill="#8fc4ec" stroke="#3a6aa8"/><rect x="3" y="6" width="10" height="6" fill="#5aa0dc"/><path d="M14.300 0l1.200 2.600 2.500.9-2.500.9-1.200 2.600-1.200-2.600-2.700-.9 2.700-.9z" fill="#f6e23a" stroke="#e8c020" stroke-width=".4"/></svg>
<div style="left:225.8px;top:151.5px;width:21.8px;height:20.8px;border:1px solid #9db0d8;border-radius:2px;background:#c9d8f6;"></div>
<svg style="left:231.0px;top:157.5px" width="11" height="9" viewBox="0 0 11 9"><path d="M2 2l3.500 4 3.500-4" stroke="#2a4a98" stroke-width="2" fill="none"/></svg>
<div style="left:249.5px;top:161.5px;width:4.0px;height:1.0px;background:#c6c3b2;"></div>
<div style="left:67.6px;top:177.5px;width:293.9px;height:22.1px;background:#fff;border:1px solid #8aa0c0;box-shadow:inset 1px 1px 0 #c8d0dc;"></div>
<svg style="left:370.5px;top:178.5px" width="17" height="20" viewBox="0 0 17 20"><path d="M1 2h14l-5 7v9l-4-2.500V9z" fill="#8a8a84"/><rect x="9" y="3" width="6" height="14" fill="#a8a8a0" opacity=".8"/></svg>
<svg style="left:398.0px;top:178.5px" width="15" height="20" viewBox="0 0 15 20"><rect x="1" y="1" width="13" height="18" fill="#a4a49c"/><rect x="4" y="4" width="5" height="12" fill="#8a8a84"/></svg>
<div style="left:423.9px;top:178.0px;width:18.9px;height:20.4px;border:1.500px solid #54709c;border-radius:3px;background:#b0b8c4;"></div>
<svg style="left:426.0px;top:180.0px" width="15" height="17" viewBox="0 0 15 17"><path d="M2 1h8l3 3v12H2z" fill="#9ca0a8" stroke="#7a8088"/><circle cx="8" cy="7" r="3" fill="#b8a890"/><path d="M6 9l-2 5" stroke="#8a7a60" stroke-width="2"/></svg>
<div style="left:66.5px;top:203.5px;width:382.5px;height:15.7px;background:#fff;"></div>
<div style="left:67.0px;top:204.0px;width:23.5px;height:14.6px;background:linear-gradient(#f4f2e6,#ebe8d8 70%,#d9d5c2);border-right:1px solid #c0bca8;border-bottom:1px solid #b8b4a0;box-shadow:inset 1px 1px 0 #fff;"></div>
<svg style="left:72.5px;top:205.5px" width="10" height="12" viewBox="0 0 10 12"><rect x="1" y="0.500" width="7" height="11" fill="#5a6ab0" stroke="#2a3a78"/><rect x="2.500" y="1.500" width="2.500" height="9" fill="#c8d0f0"/></svg>
<div style="left:90.5px;top:204.0px;width:232.0px;height:14.6px;background:linear-gradient(#f4f2e6,#ebe8d8 70%,#d9d5c2);border-right:1px solid #c0bca8;border-bottom:1px solid #b8b4a0;box-shadow:inset 1px 1px 0 #fff;"></div>
<span class="t" style="top:203.3px;font-size:12.6px;line-height:16.6px;left:199.7px;transform:translateX(-50%) scaleX(0.856);transform-origin:50% 50%;">Name</span>
<div style="left:322.5px;top:204.0px;width:126.0px;height:14.6px;background:linear-gradient(#f4f2e6,#ebe8d8 70%,#d9d5c2);border-right:1px solid #c0bca8;border-bottom:1px solid #b8b4a0;box-shadow:inset 1px 1px 0 #fff;"></div>
<span class="t" style="top:203.3px;font-size:12.6px;line-height:16.6px;left:378.6px;transform:translateX(-50%) scaleX(0.848);transform-origin:50% 50%;">Date</span>
<div style="left:66.5px;top:219.3px;width:24.4px;height:294.7px;background:#f0f0ee;"></div>
<div style="left:90.9px;top:219.3px;width:358.1px;height:294.7px;background:#fff;"></div>
<div style="left:66.5px;top:238.2px;width:24.4px;height:17.9px;background:#c9c9c9;"></div>
<div style="left:66.5px;top:348.2px;width:24.4px;height:92.1px;background:#c9c9c9;"></div>
<div style="left:66.5px;top:440.3px;width:24.4px;height:18.4px;background:#dcdcdc;"></div>
<div style="left:90.9px;top:348.2px;width:358.1px;height:92.1px;background:#e9e8f7;"></div>
<div style="left:90.9px;top:440.3px;width:358.1px;height:17.9px;background:#2e62b6;"></div>
<div style="left:70.0px;top:443.2px;width:16.8px;height:12.4px;background:#9a9a98;border:1px solid #787876;"></div>
<svg style="left:71.5px;top:444.5px" width="14" height="10" viewBox="0 0 14 10"><path d="M1 1h8l4 4-4 4H1z" fill="#58c840" stroke="#2a7a20"/></svg>
<div style="left:99.2px;top:228.5px;width:1.0px;height:276.3px;background-image:linear-gradient(#9a9aa8 50%,transparent 50%);background-size:1px 2px;"></div>
<div style="left:99.2px;top:504.8px;width:12.0px;height:1.0px;background-image:linear-gradient(90deg,#9a9aa8 50%,transparent 50%);background-size:2px 1px;"></div>
<div style="left:119.7px;top:246.9px;width:1.0px;height:239.5px;background-image:linear-gradient(#9a9aa8 50%,transparent 50%);background-size:1px 2px;"></div>
<div style="left:140.2px;top:265.4px;width:1.0px;height:92.1px;background-image:linear-gradient(#9a9aa8 50%,transparent 50%);background-size:1px 2px;"></div>
<div style="left:160.7px;top:361.1px;width:1.0px;height:70.0px;background-image:linear-gradient(#9a9aa8 50%,transparent 50%);background-size:1px 2px;"></div>
<div style="left:181.2px;top:398.0px;width:1.0px;height:14.7px;background-image:linear-gradient(#9a9aa8 50%,transparent 50%);background-size:1px 2px;"></div>
<div style="left:181.2px;top:434.8px;width:1.0px;height:14.7px;background-image:linear-gradient(#9a9aa8 50%,transparent 50%);background-size:1px 2px;"></div>
<div style="left:104.2px;top:228.5px;width:8.0px;height:1.0px;background-image:linear-gradient(90deg,#9a9aa8 50%,transparent 50%);background-size:2px 1px;"></div>
<svg style="left:93.9px;top:223.2px" width="10.6" height="10.6" viewBox="0 0 10.6 10.6"><defs><linearGradient id="eg" x1="0" y1="0" x2="1" y2="1"><stop offset="0" stop-color="#faf8ff"/><stop offset="1" stop-color="#bcaae2"/></linearGradient></defs><rect x="0.700" y="0.700" width="9.200" height="9.200" rx="1.800" fill="url(#eg)" stroke="#7360b8" stroke-width="1.400"/><path d="M2.800 5.300h5" stroke="#2f2a7a" stroke-width="1.400"/></svg>
<svg style="left:111.7px;top:220.5px" width="16" height="16" viewBox="0 0 16 16"><circle cx="7" cy="4.200" r="3.200" fill="#e8b068" stroke="#a87030"/><path d="M1 15q0-7 6-7t6 7z" fill="#5a9ad8" stroke="#2a5a98"/></svg>
<span class="t" style="top:220.5px;font-size:12.6px;line-height:16.6px;color:#000;left:131.5px;transform:scaleX(0.874);transform-origin:0 50%;">Administrator</span>
<div style="left:124.7px;top:246.9px;width:8.0px;height:1.0px;background-image:linear-gradient(90deg,#9a9aa8 50%,transparent 50%);background-size:2px 1px;"></div>
<svg style="left:114.4px;top:241.6px" width="10.6" height="10.6" viewBox="0 0 10.6 10.6"><defs><linearGradient id="eg" x1="0" y1="0" x2="1" y2="1"><stop offset="0" stop-color="#faf8ff"/><stop offset="1" stop-color="#bcaae2"/></linearGradient></defs><rect x="0.700" y="0.700" width="9.200" height="9.200" rx="1.800" fill="url(#eg)" stroke="#7360b8" stroke-width="1.400"/><path d="M2.800 5.300h5" stroke="#2f2a7a" stroke-width="1.400"/></svg>
<svg style="left:132.2px;top:238.9px" width="16" height="16" viewBox="0 0 16 16"><defs><linearGradient id="fg" x1="0" y1="0" x2="0" y2="1"><stop offset="0" stop-color="#fbc060"/><stop offset="1" stop-color="#e87818"/></linearGradient></defs><path d="M0.500 3.500q0-1 1-1h4l1.500 2H14.500q1 0 1 1v8q0 1-1 1H1.500q-1 0-1-1z" fill="#e8862a" stroke="#b85a10"/><path d="M0.500 7q0-1 1-1h13q1 0 1 1v6.500q0 1-1 1H1.500q-1 0-1-1z" fill="url(#fg)" stroke="#c06a14"/></svg>
<span class="t" style="top:238.9px;font-size:12.6px;line-height:16.6px;color:#000;left:152.0px;transform:scaleX(0.774);transform-origin:0 50%;">FOLDER</span>
<div style="left:145.2px;top:265.4px;width:8.0px;height:1.0px;background-image:linear-gradient(90deg,#9a9aa8 50%,transparent 50%);background-size:2px 1px;"></div>
<svg style="left:134.9px;top:260.1px" width="10.6" height="10.6" viewBox="0 0 10.6 10.6"><defs><linearGradient id="eg" x1="0" y1="0" x2="1" y2="1"><stop offset="0" stop-color="#faf8ff"/><stop offset="1" stop-color="#bcaae2"/></linearGradient></defs><rect x="0.700" y="0.700" width="9.200" height="9.200" rx="1.800" fill="url(#eg)" stroke="#7360b8" stroke-width="1.400"/><path d="M2.800 5.300h5" stroke="#2f2a7a" stroke-width="1.400"/><path d="M5.300 2.800v5" stroke="#2f2a7a" stroke-width="1.400"/></svg>
<svg style="left:152.7px;top:257.4px" width="16" height="16" viewBox="0 0 16 16"><rect x="2" y="1.500" width="12" height="13" fill="#b07840" stroke="#6a4018"/><path d="M0.800 4h3M0.800 7h3M0.800 10h3M0.800 13h3" stroke="#666" stroke-width="1.100"/><rect x="5.500" y="3.500" width="6.500" height="3.500" fill="#e0c090"/><rect x="5.500" y="9" width="6.500" height="3" fill="#c89858"/></svg>
<div style="left:171.2px;top:256.4px;width:151.3px;height:18px;overflow:hidden;">
<span class="t" style="top:1.0px;font-size:12.6px;line-height:16.6px;color:#000;left:1.3px;transform:scaleX(0.823);transform-origin:0 50%;">20200108-FITC-PECY7-APC-PE</span>
</div>
<span class="t" style="top:257.4px;font-size:12.6px;line-height:16.6px;color:#000;left:323.5px;transform:scaleX(0.866);transform-origin:0 50%;">1/8/20 3:29:02 PM</span>
<div style="left:145.2px;top:283.8px;width:8.0px;height:1.0px;background-image:linear-gradient(90deg,#9a9aa8 50%,transparent 50%);background-size:2px 1px;"></div>
<svg style="left:134.9px;top:278.5px" width="10.6" height="10.6" viewBox="0 0 10.6 10.6"><defs><linearGradient id="eg" x1="0" y1="0" x2="1" y2="1"><stop offset="0" stop-color="#faf8ff"/><stop offset="1" stop-color="#bcaae2"/></linearGradient></defs><rect x="0.700" y="0.700" width="9.200" height="9.200" rx="1.800" fill="url(#eg)" stroke="#7360b8" stroke-width="1.400"/><path d="M2.800 5.300h5" stroke="#2f2a7a" stroke-width="1.400"/><path d="M5.300 2.800v5" stroke="#2f2a7a" stroke-width="1.400"/></svg>
<svg style="left:152.7px;top:275.8px" width="16" height="16" viewBox="0 0 16 16"><rect x="2" y="1.500" width="12" height="13" fill="#b07840" stroke="#6a4018"/><path d="M0.800 4h3M0.800 7h3M0.800 10h3M0.800 13h3" stroke="#666" stroke-width="1.100"/><rect x="5.500" y="3.500" width="6.500" height="3.500" fill="#e0c090"/><rect x="5.500" y="9" width="6.500" height="3" fill="#c89858"/></svg>
<div style="left:171.2px;top:274.8px;width:151.3px;height:18px;overflow:hidden;">
<span class="t" style="top:1.0px;font-size:12.6px;line-height:16.6px;color:#000;left:1.3px;transform:scaleX(0.825);transform-origin:0 50%;">20200108-APC-FITC-PECY7-S</span>
</div>
<span class="t" style="top:275.8px;font-size:12.6px;line-height:16.6px;color:#000;left:323.5px;transform:scaleX(0.866);transform-origin:0 50%;">1/8/20 4:03:44 PM</span>
<div style="left:145.2px;top:302.2px;width:8.0px;height:1.0px;background-image:linear-gradient(90deg,#9a9aa8 50%,transparent 50%);background-size:2px 1px;"></div>
<svg style="left:134.9px;top:296.9px" width="10.6" height="10.6" viewBox="0 0 10.6 10.6"><defs><linearGradient id="eg" x1="0" y1="0" x2="1" y2="1"><stop offset="0" stop-color="#faf8ff"/><stop offset="1" stop-color="#bcaae2"/></linearGradient></defs><rect x="0.700" y="0.700" width="9.200" height="9.200" rx="1.800" fill="url(#eg)" stroke="#7360b8" stroke-width="1.400"/><path d="M2.800 5.300h5" stroke="#2f2a7a" stroke-width="1.400"/><path d="M5.300 2.800v5" stroke="#2f2a7a" stroke-width="1.400"/></svg>
<svg style="left:152.7px;top:294.2px" width="16" height="16" viewBox="0 0 16 16"><rect x="2" y="1.500" width="12" height="13" fill="#b07840" stroke="#6a4018"/><path d="M0.800 4h3M0.800 7h3M0.800 10h3M0.800 13h3" stroke="#666" stroke-width="1.100"/><rect x="5.500" y="3.500" width="6.500" height="3.500" fill="#e0c090"/><rect x="5.500" y="9" width="6.500" height="3" fill="#c89858"/></svg>
<div style="left:171.2px;top:293.2px;width:151.3px;height:18px;overflow:hidden;">
<span class="t" style="top:1.0px;font-size:12.6px;line-height:16.6px;color:#000;left:1.3px;transform:scaleX(0.851);transform-origin:0 50%;">20200109-FITC</span>
</div>
<span class="t" style="top:294.2px;font-size:12.6px;line-height:16.6px;color:#000;left:323.5px;transform:scaleX(0.866);transform-origin:0 50%;">1/9/20 2:54:17 PM</span>
<div style="left:145.2px;top:320.6px;width:8.0px;height:1.0px;background-image:linear-gradient(90deg,#9a9aa8 50%,transparent 50%);background-size:2px 1px;"></div>
<svg style="left:134.9px;top:315.3px" width="10.6" height="10.6" viewBox="0 0 10.6 10.6"><defs><linearGradient id="eg" x1="0" y1="0" x2="1" y2="1"><stop offset="0" stop-color="#faf8ff"/><stop offset="1" stop-color="#bcaae2"/></linearGradient></defs><rect x="0.700" y="0.700" width="9.200" height="9.200" rx="1.800" fill="url(#eg)" stroke="#7360b8" stroke-width="1.400"/><path d="M2.800 5.300h5" stroke="#2f2a7a" stroke-width="1.400"/><path d="M5.300 2.800v5" stroke="#2f2a7a" stroke-width="1.400"/></svg>
<svg style="left:152.7px;top:312.6px" width="16" height="16" viewBox="0 0 16 16"><rect x="2" y="1.500" width="12" height="13" fill="#b07840" stroke="#6a4018"/><path d="M0.800 4h3M0.800 7h3M0.800 10h3M0.800 13h3" stroke="#666" stroke-width="1.100"/><rect x="5.500" y="3.500" width="6.500" height="3.500" fill="#e0c090"/><rect x="5.500" y="9" width="6.500" height="3" fill="#c89858"/></svg>
<div style="left:171.2px;top:311.6px;width:151.3px;height:18px;overflow:hidden;">
<span class="t" style="top:1.0px;font-size:12.6px;line-height:16.6px;color:#000;left:1.3px;transform:scaleX(0.83);transform-origin:0 50%;">20200109-APC-FITC-PE</span>
</div>
<span class="t" style="top:312.6px;font-size:12.6px;line-height:16.6px;color:#000;left:323.5px;transform:scaleX(0.866);transform-origin:0 50%;">1/9/20 3:53:29 PM</span>
<div style="left:145.2px;top:339.0px;width:8.0px;height:1.0px;background-image:linear-gradient(90deg,#9a9aa8 50%,transparent 50%);background-size:2px 1px;"></div>
<svg style="left:134.9px;top:333.7px" width="10.6" height="10.6" viewBox="0 0 10.6 10.6"><defs><linearGradient id="eg" x1="0" y1="0" x2="1" y2="1"><stop offset="0" stop-color="#faf8ff"/><stop offset="1" stop-color="#bcaae2"/></linearGradient></defs><rect x="0.700" y="0.700" width="9.200" height="9.200" rx="1.800" fill="url(#eg)" stroke="#7360b8" stroke-width="1.400"/><path d="M2.800 5.300h5" stroke="#2f2a7a" stroke-width="1.400"/><path d="M5.300 2.800v5" stroke="#2f2a7a" stroke-width="1.400"/></svg>
<svg style="left:152.7px;top:331.0px" width="16" height="16" viewBox="0 0 16 16"><rect x="2" y="1.500" width="12" height="13" fill="#b07840" stroke="#6a4018"/><path d="M0.800 4h3M0.800 7h3M0.800 10h3M0.800 13h3" stroke="#666" stroke-width="1.100"/><rect x="5.500" y="3.500" width="6.500" height="3.500" fill="#e0c090"/><rect x="5.500" y="9" width="6.500" height="3" fill="#c89858"/></svg>
<div style="left:171.2px;top:330.0px;width:151.3px;height:18px;overflow:hidden;">
<span class="t" style="top:1.0px;font-size:12.6px;line-height:16.6px;color:#000;left:1.3px;transform:scaleX(0.831);transform-origin:0 50%;">20200109-FITC-APCCY7</span>
</div>
<span class="t" style="top:331.0px;font-size:12.6px;line-height:16.6px;color:#000;left:323.5px;transform:scaleX(0.866);transform-origin:0 50%;">1/9/20 4:11:43 PM</span>
<div style="left:145.2px;top:357.5px;width:8.0px;height:1.0px;background-image:linear-gradient(90deg,#9a9aa8 50%,transparent 50%);background-size:2px 1px;"></div>
<svg style="left:134.9px;top:352.2px" width="10.6" height="10.6" viewBox="0 0 10.6 10.6"><defs><linearGradient id="eg" x1="0" y1="0" x2="1" y2="1"><stop offset="0" stop-color="#faf8ff"/><stop offset="1" stop-color="#bcaae2"/></linearGradient></defs><rect x="0.700" y="0.700" width="9.200" height="9.200" rx="1.800" fill="url(#eg)" stroke="#7360b8" stroke-width="1.400"/><path d="M2.800 5.300h5" stroke="#2f2a7a" stroke-width="1.400"/></svg>
<svg style="left:152.7px;top:349.5px" width="16" height="16" viewBox="0 0 16 16"><path d="M0.300 3.500h15.400v11.500h-15.400z" fill="#a87848"/><path d="M0.500 2.500q4-1.500 7.500 0q3.500-1.500 7.500 0v11q-4-1.500-7.500 0q-3.500-1.500-7.500 0z" fill="#f4f4f8" stroke="#555a70"/><path d="M8 2.500v12" stroke="#555a70"/><path d="M2 5q2.500-.8 4.500 0M2 8q2.500-.8 4.500 0M2 11q2.500-.8 4.500 0" stroke="#7a8ac0"/><rect x="10" y="4" width="4" height="9" fill="#b8c4e8"/></svg>
<div style="left:171.2px;top:348.5px;width:151.3px;height:18px;overflow:hidden;">
<span class="t" style="top:1.0px;font-size:12.6px;line-height:16.6px;color:#000;left:1.3px;transform:scaleX(0.862);transform-origin:0 50%;">20191118-SP</span>
</div>
<span class="t" style="top:349.5px;font-size:12.6px;line-height:16.6px;color:#000;left:323.5px;transform:scaleX(0.866);transform-origin:0 50%;">1/9/20 4:24:00 PM</span>
<div style="left:160.7px;top:375.9px;width:13.0px;height:1.0px;background-image:linear-gradient(90deg,#9a9aa8 50%,transparent 50%);background-size:2px 1px;"></div>
<svg style="left:173.2px;top:367.9px" width="16" height="16" viewBox="0 0 16 16"><circle cx="11.500" cy="3.500" r="3.200" fill="#3a2a80"/><circle cx="10.500" cy="2.500" r="1" fill="#a8a0e0"/><circle cx="2" cy="8" r="1.200" fill="#3a6ac8"/><circle cx="2" cy="12" r="1.200" fill="#3a6ac8"/><ellipse cx="7.500" cy="10.500" rx="3.500" ry="2.600" fill="#4a8ad8" stroke="#2a4a90"/></svg>
<span class="t" style="top:367.9px;font-size:12.6px;line-height:16.6px;color:#000;left:193.0px;transform:scaleX(0.869);transform-origin:0 50%;">Cytometer Settings</span>
<div style="left:165.7px;top:394.3px;width:8.0px;height:1.0px;background-image:linear-gradient(90deg,#9a9aa8 50%,transparent 50%);background-size:2px 1px;"></div>
<svg style="left:155.4px;top:389.0px" width="10.6" height="10.6" viewBox="0 0 10.6 10.6"><defs><linearGradient id="eg" x1="0" y1="0" x2="1" y2="1"><stop offset="0" stop-color="#faf8ff"/><stop offset="1" stop-color="#bcaae2"/></linearGradient></defs><rect x="0.700" y="0.700" width="9.200" height="9.200" rx="1.800" fill="url(#eg)" stroke="#7360b8" stroke-width="1.400"/><path d="M2.800 5.300h5" stroke="#2f2a7a" stroke-width="1.400"/></svg>
<svg style="left:173.2px;top:386.3px" width="16" height="16" viewBox="0 0 16 16"><path d="M0.500 4h5l1.500 2h8.500v9H0.500z" fill="#e8782a" stroke="#a84810"/><rect x="4" y="0.800" width="8" height="7" fill="#f4f4fa" stroke="#5a5a80"/><path d="M0.500 8.500h15v6.500H0.500z" fill="#f8a040" stroke="#b86018"/></svg>
<span class="t" style="top:386.3px;font-size:12.6px;line-height:16.6px;color:#000;left:193.0px;transform:scaleX(0.864);transform-origin:0 50%;">Global Worksheets</span>
<div style="left:181.2px;top:412.7px;width:13.0px;height:1.0px;background-image:linear-gradient(90deg,#9a9aa8 50%,transparent 50%);background-size:2px 1px;"></div>
<svg style="left:193.7px;top:404.7px" width="16" height="16" viewBox="0 0 16 16"><rect x="1" y="0.800" width="10" height="13.500" fill="#f4f4fa" stroke="#5a5a90"/><rect x="2.500" y="2.500" width="3" height="3" fill="#6a7ac8"/><rect x="2.500" y="7.500" width="3" height="3" fill="#6a7ac8"/><rect x="7" y="2" width="3" height="4" fill="#4a3a9a"/><rect x="7.500" y="8.500" width="7.500" height="6.500" fill="#c07830" stroke="#80481a"/></svg>
<span class="t" style="top:404.7px;font-size:12.6px;line-height:16.6px;color:#000;left:213.5px;transform:scaleX(0.861);transform-origin:0 50%;">Global Sheet1</span>
<div style="left:165.7px;top:431.1px;width:8.0px;height:1.0px;background-image:linear-gradient(90deg,#9a9aa8 50%,transparent 50%);background-size:2px 1px;"></div>
<svg style="left:155.4px;top:425.8px" width="10.6" height="10.6" viewBox="0 0 10.6 10.6"><defs><linearGradient id="eg" x1="0" y1="0" x2="1" y2="1"><stop offset="0" stop-color="#faf8ff"/><stop offset="1" stop-color="#bcaae2"/></linearGradient></defs><rect x="0.700" y="0.700" width="9.200" height="9.200" rx="1.800" fill="url(#eg)" stroke="#7360b8" stroke-width="1.400"/><path d="M2.800 5.300h5" stroke="#2f2a7a" stroke-width="1.400"/></svg>
<svg style="left:173.2px;top:423.1px" width="16" height="16" viewBox="0 0 16 16"><path d="M3 2l10 11" stroke="#4a3a8a" stroke-width="3"/><path d="M1.500 4.500l4.500-4M11.500 13l4 3" stroke="#222" stroke-width="1.300"/></svg>
<span class="t" style="top:423.1px;font-size:12.6px;line-height:16.6px;color:#000;left:193.0px;transform:scaleX(0.876);transform-origin:0 50%;">Specimen_001</span>
<div style="left:181.2px;top:449.6px;width:13.0px;height:1.0px;background-image:linear-gradient(90deg,#9a9aa8 50%,transparent 50%);background-size:2px 1px;"></div>
<svg style="left:193.7px;top:441.6px" width="16" height="16" viewBox="0 0 16 16"><path d="M5 1h6M6 1.500v11a2 2 0 0 0 4 0v-11" fill="#c8d0f4" stroke="#8a92d8" stroke-width="1.300"/></svg>
<span class="t" style="top:441.6px;font-size:12.6px;line-height:16.6px;color:#fff;left:213.5px;transform:scaleX(0.872);transform-origin:0 50%;">Tube_001</span>
<div style="left:124.7px;top:468.0px;width:8.0px;height:1.0px;background-image:linear-gradient(90deg,#9a9aa8 50%,transparent 50%);background-size:2px 1px;"></div>
<svg style="left:114.4px;top:462.7px" width="10.6" height="10.6" viewBox="0 0 10.6 10.6"><defs><linearGradient id="eg" x1="0" y1="0" x2="1" y2="1"><stop offset="0" stop-color="#faf8ff"/><stop offset="1" stop-color="#bcaae2"/></linearGradient></defs><rect x="0.700" y="0.700" width="9.200" height="9.200" rx="1.800" fill="url(#eg)" stroke="#7360b8" stroke-width="1.400"/><path d="M2.800 5.300h5" stroke="#2f2a7a" stroke-width="1.400"/><path d="M5.300 2.800v5" stroke="#2f2a7a" stroke-width="1.400"/></svg>
<svg style="left:132.2px;top:460.0px" width="16" height="16" viewBox="0 0 16 16"><rect x="2" y="1.500" width="12" height="13" fill="#b07840" stroke="#6a4018"/><path d="M0.800 4h3M0.800 7h3M0.800 10h3M0.800 13h3" stroke="#666" stroke-width="1.100"/><rect x="5.500" y="3.500" width="6.500" height="3.500" fill="#e0c090"/><rect x="5.500" y="9" width="6.500" height="3" fill="#c89858"/></svg>
<div style="left:150.7px;top:459.0px;width:171.8px;height:18px;overflow:hidden;">
<span class="t" style="top:1.0px;font-size:12.6px;line-height:16.6px;color:#000;left:1.3px;transform:scaleX(0.887);transform-origin:0 50%;">20130904-cv</span>
</div>
<span class="t" style="top:460.0px;font-size:12.6px;line-height:16.6px;color:#000;left:323.5px;transform:scaleX(0.869);transform-origin:0 50%;">12/13/16 4:56:01 PM</span>
<div style="left:124.7px;top:486.4px;width:8.0px;height:1.0px;background-image:linear-gradient(90deg,#9a9aa8 50%,transparent 50%);background-size:2px 1px;"></div>
<svg style="left:114.4px;top:481.1px" width="10.6" height="10.6" viewBox="0 0 10.6 10.6"><defs><linearGradient id="eg" x1="0" y1="0" x2="1" y2="1"><stop offset="0" stop-color="#faf8ff"/><stop offset="1" stop-color="#bcaae2"/></linearGradient></defs><rect x="0.700" y="0.700" width="9.200" height="9.200" rx="1.800" fill="url(#eg)" stroke="#7360b8" stroke-width="1.400"/><path d="M2.800 5.300h5" stroke="#2f2a7a" stroke-width="1.400"/><path d="M5.300 2.800v5" stroke="#2f2a7a" stroke-width="1.400"/></svg>
<svg style="left:132.2px;top:478.4px" width="16" height="16" viewBox="0 0 16 16"><rect x="2" y="1.500" width="12" height="13" fill="#b07840" stroke="#6a4018"/><path d="M0.800 4h3M0.800 7h3M0.800 10h3M0.800 13h3" stroke="#666" stroke-width="1.100"/><rect x="5.500" y="3.500" width="6.500" height="3.500" fill="#e0c090"/><rect x="5.500" y="9" width="6.500" height="3" fill="#c89858"/></svg>
<div style="left:150.7px;top:477.4px;width:171.8px;height:18px;overflow:hidden;">
<span class="t" style="top:1.0px;font-size:12.6px;line-height:16.6px;color:#000;left:1.3px;transform:scaleX(0.862);transform-origin:0 50%;">20161223-CV</span>
</div>
<span class="t" style="top:478.4px;font-size:12.6px;line-height:16.6px;color:#000;left:323.5px;transform:scaleX(0.869);transform-origin:0 50%;">12/23/19 2:47:38 PM</span>
<div style="left:99.2px;top:504.8px;width:13.0px;height:1.0px;background-image:linear-gradient(90deg,#9a9aa8 50%,transparent 50%);background-size:2px 1px;"></div>
<svg style="left:111.7px;top:496.8px" width="16" height="16" viewBox="0 0 16 16"><circle cx="9" cy="4" r="3" fill="#e8b068" stroke="#a87030"/><path d="M3.500 15q0-7 5.500-7t5.500 7z" fill="#e8c050" stroke="#a88020"/><rect x="0.500" y="8" width="4" height="6" fill="#2a3a98"/></svg>
<span class="t" style="top:496.8px;font-size:12.6px;line-height:16.6px;color:#000;left:131.5px;transform:scaleX(0.86);transform-origin:0 50%;">Shared View</span>
<div style="left:475.7px;top:123.5px;width:1036.6px;height:373.3px;background:#1f52a8;border-radius:7px 7px 0 0;"></div>
<div style="left:475.7px;top:123.5px;width:1036.6px;height:30.3px;border-radius:7px 7px 0 0;background:linear-gradient(#2f70c8 0%,#2560b6 12%,#2055aa 45%,#2158ae 80%,#1f50a4 100%);"></div>
<div style="left:480.2px;top:153.8px;width:1027.6px;height:337.5px;background:#ece9d8;"></div>
<svg style="left:481.5px;top:131.8px" width="15" height="14" viewBox="0 0 15 14"><rect x="0.500" y="0.500" width="14" height="13" fill="#fdfdfd" stroke="#c8d4f0"/><path d="M1.500 7h12M4 3.500l4 7M8 3.500l-4 7M6 2.500v9" stroke="#d81828" stroke-width="1.400"/></svg>
<span class="t" style="top:129.8px;font-size:14.5px;line-height:18.5px;color:#fff;font-weight:bold;left:501.0px;transform:scaleX(0.897);transform-origin:0 50%;text-shadow:1px 1px 1px #0a2a66;">Cytometer - LSRFortessa (1)</span>
<div style="left:1487.7px;top:129.3px;width:20.3px;height:21.2px;border:1px solid #f4e8e4;border-radius:3.5px;background:linear-gradient(135deg,#ea8c6c,#d24a26 50%,#c03c18);"></div>
<svg style="left:1487.7px;top:129.3px" width="20.3" height="21.2" viewBox="0 0 20.3 21.2"><path d="M5.7 5.9L14.6 15.3M14.6 5.9L5.7 15.3" stroke="#fff" stroke-width="2.3" stroke-linecap="round"/></svg>
<div style="left:486.5px;top:181.6px;width:1013.7px;height:274.6px;background:#91c8cd;border:1px solid #7fb4ba;box-shadow:1px 1px 0 #9a9788;"></div>
<div style="left:489.0px;top:163.3px;width:40.3px;height:18.3px;background:linear-gradient(#fdfdfb,#f1f0e8 80%,#e4e2d6);border:1px solid #919b9c;border-bottom:none;border-radius:3px 3px 0 0;"></div>
<span class="t" style="top:165.0px;font-size:12.6px;line-height:16.6px;left:509.1px;transform:translateX(-50%) scaleX(0.86);transform-origin:50% 50%;">Status</span>
<div style="left:600.2px;top:163.3px;width:56.2px;height:18.3px;background:linear-gradient(#91c8cd,#86bcc2);border:1px solid #7fb4ba;border-bottom:none;border-radius:3px 3px 0 0;"></div>
<span class="t" style="top:165.0px;font-size:12.6px;line-height:16.6px;left:628.3px;transform:translateX(-50%) scaleX(0.871);transform-origin:50% 50%;">Threshold</span>
<div style="left:658.8px;top:163.3px;width:35.7px;height:18.3px;background:linear-gradient(#91c8cd,#86bcc2);border:1px solid #7fb4ba;border-bottom:none;border-radius:3px 3px 0 0;"></div>
<span class="t" style="top:165.0px;font-size:12.6px;line-height:16.6px;left:676.6px;transform:translateX(-50%) scaleX(0.862);transform-origin:50% 50%;">Laser</span>
<div style="left:697.0px;top:163.3px;width:77.6px;height:18.3px;background:linear-gradient(#91c8cd,#86bcc2);border:1px solid #7fb4ba;border-bottom:none;border-radius:3px 3px 0 0;"></div>
<span class="t" style="top:165.0px;font-size:12.6px;line-height:16.6px;left:735.8px;transform:translateX(-50%) scaleX(0.874);transform-origin:50% 50%;">Compensation</span>
<div style="left:777.0px;top:163.3px;width:35.2px;height:18.3px;background:linear-gradient(#91c8cd,#86bcc2);border:1px solid #7fb4ba;border-bottom:none;border-radius:3px 3px 0 0;"></div>
<span class="t" style="top:165.0px;font-size:12.6px;line-height:16.6px;left:794.6px;transform:translateX(-50%) scaleX(0.852);transform-origin:50% 50%;">Ratio</span>
<div style="left:529.5px;top:160.9px;width:70.1px;height:21.9px;background:#91c8cd;border:1px solid #7fb4ba;border-bottom:none;border-radius:3px 3px 0 0;"></div>
<div style="left:529.5px;top:160.9px;width:70.1px;height:2.2px;background:#e8a838;border-radius:3px 3px 0 0;border:1px solid #d89020;border-bottom:none;"></div>
<span class="t" style="top:162.8px;font-size:12.6px;line-height:16.6px;left:564.5px;transform:translateX(-50%) scaleX(0.872);transform-origin:50% 50%;">Parameters</span>
<div style="left:493.0px;top:190.3px;width:1001.6px;height:226.3px;background:#ece9d8;border:1px solid #8aa8ac;border-right-color:#e8f4f4;border-bottom-color:#e8f4f4;"></div>
<div style="left:494.0px;top:191.3px;width:999.6px;height:19.9px;background:linear-gradient(#f3f1e4,#ece9d8 75%,#dcd8c6);border-bottom:2px solid #c9c5b2;"></div>
<div style="left:513.7px;top:191.3px;width:287.6px;height:19.9px;background:linear-gradient(#f3f1e4,#ece9d8 75%,#dcd8c6);border-right:1px solid #c4c0ac;border-bottom:2px solid #c9c5b2;box-shadow:inset 1px 0 0 #fbfaf4;"></div>
<span class="t" style="top:192.9px;font-size:12.6px;line-height:16.6px;left:521.5px;transform:scaleX(0.871);transform-origin:0 50%;">Parameter</span>
<div style="left:801.3px;top:191.3px;width:68.0px;height:19.9px;background:linear-gradient(#f3f1e4,#ece9d8 75%,#dcd8c6);border-right:1px solid #c4c0ac;border-bottom:2px solid #c9c5b2;box-shadow:inset 1px 0 0 #fbfaf4;"></div>
<span class="t" style="top:192.9px;font-size:12.6px;line-height:16.6px;left:810.5px;transform:scaleX(0.865);transform-origin:0 50%;">Voltage</span>
<div style="left:869.3px;top:191.3px;width:152.2px;height:19.9px;background:linear-gradient(#f3f1e4,#ece9d8 75%,#dcd8c6);border-right:1px solid #c4c0ac;border-bottom:2px solid #c9c5b2;box-shadow:inset 1px 0 0 #fbfaf4;"></div>
<span class="t" style="top:192.9px;font-size:12.6px;line-height:16.6px;left:878.5px;transform:scaleX(0.849);transform-origin:0 50%;">Log</span>
<div style="left:1021.5px;top:191.3px;width:150.2px;height:19.9px;background:linear-gradient(#f3f1e4,#ece9d8 75%,#dcd8c6);border-right:1px solid #c4c0ac;border-bottom:2px solid #c9c5b2;box-shadow:inset 1px 0 0 #fbfaf4;"></div>
<span class="t" style="top:192.9px;font-size:12.6px;line-height:16.6px;left:1029.7px;transform:scaleX(0.774);transform-origin:0 50%;">A</span>
<div style="left:1171.7px;top:191.3px;width:152.9px;height:19.9px;background:linear-gradient(#f3f1e4,#ece9d8 75%,#dcd8c6);border-right:1px solid #c4c0ac;border-bottom:2px solid #c9c5b2;box-shadow:inset 1px 0 0 #fbfaf4;"></div>
<span class="t" style="top:192.9px;font-size:12.6px;line-height:16.6px;left:1180.7px;transform:scaleX(0.774);transform-origin:0 50%;">H</span>
<div style="left:1324.6px;top:191.3px;width:151.2px;height:19.9px;background:linear-gradient(#f3f1e4,#ece9d8 75%,#dcd8c6);border-right:1px solid #c4c0ac;border-bottom:2px solid #c9c5b2;box-shadow:inset 1px 0 0 #fbfaf4;"></div>
<span class="t" style="top:192.9px;font-size:12.6px;line-height:16.6px;left:1333.6px;transform:scaleX(0.774);transform-origin:0 50%;">W</span>
<div style="left:513.7px;top:211.4px;width:962.1px;height:97.2px;background:#fff;"></div>
<div style="left:1021.5px;top:250.3px;width:150.2px;height:58.3px;background:#f9f7cb;"></div>
<svg style="left:500.5px;top:218.1px" width="6" height="6" viewBox="0 0 6 6"><circle cx="3" cy="3" r="1.800" fill="#333"/><circle cx="3.600" cy="2.300" r=".8" fill="#aaa"/></svg>
<span class="t" style="top:213.1px;font-size:12.6px;line-height:16.6px;left:514.6px;transform:scaleX(0.774);transform-origin:0 50%;">FSC</span>
<span class="t" style="top:213.1px;font-size:12.6px;line-height:16.6px;left:803.7px;transform:scaleX(0.887);transform-origin:0 50%;">501</span>
<div style="left:939.2px;top:215.1px;width:12.6px;height:12.6px;border:1.300px solid #3a5a80;background:linear-gradient(135deg,#dcdcd4,#fff 70%);"></div>
<div style="left:1090.7px;top:215.1px;width:12.6px;height:12.6px;border:1.300px solid #3a5a80;background:linear-gradient(135deg,#dcdcd4,#fff 70%);"></div>
<svg style="left:1092.0px;top:216.4px" width="10" height="10" viewBox="0 0 10 10"><path d="M1.500 4.800L4 7.600L8.500 2" stroke="#2ea028" stroke-width="2.200" fill="none"/></svg>
<div style="left:1243.1px;top:215.1px;width:12.6px;height:12.6px;border:1.300px solid #3a5a80;background:linear-gradient(135deg,#dcdcd4,#fff 70%);"></div>
<div style="left:1394.0px;top:215.1px;width:12.6px;height:12.6px;border:1.300px solid #3a5a80;background:linear-gradient(135deg,#dcdcd4,#fff 70%);"></div>
<svg style="left:1395.3px;top:216.4px" width="10" height="10" viewBox="0 0 10 10"><path d="M1.500 4.800L4 7.600L8.500 2" stroke="#2ea028" stroke-width="2.200" fill="none"/></svg>
<svg style="left:500.5px;top:237.5px" width="6" height="6" viewBox="0 0 6 6"><circle cx="3" cy="3" r="1.800" fill="#333"/><circle cx="3.600" cy="2.300" r=".8" fill="#aaa"/></svg>
<span class="t" style="top:232.5px;font-size:12.6px;line-height:16.6px;left:514.6px;transform:scaleX(0.774);transform-origin:0 50%;">SSC</span>
<span class="t" style="top:232.5px;font-size:12.6px;line-height:16.6px;left:803.7px;transform:scaleX(0.887);transform-origin:0 50%;">262</span>
<div style="left:939.2px;top:234.5px;width:12.6px;height:12.6px;border:1.300px solid #3a5a80;background:linear-gradient(135deg,#dcdcd4,#fff 70%);"></div>
<div style="left:1090.7px;top:234.5px;width:12.6px;height:12.6px;border:1.300px solid #3a5a80;background:linear-gradient(135deg,#dcdcd4,#fff 70%);"></div>
<svg style="left:1092.0px;top:235.8px" width="10" height="10" viewBox="0 0 10 10"><path d="M1.500 4.800L4 7.600L8.500 2" stroke="#2ea028" stroke-width="2.200" fill="none"/></svg>
<div style="left:1243.1px;top:234.5px;width:12.6px;height:12.6px;border:1.300px solid #3a5a80;background:linear-gradient(135deg,#dcdcd4,#fff 70%);"></div>
<div style="left:1394.0px;top:234.5px;width:12.6px;height:12.6px;border:1.300px solid #3a5a80;background:linear-gradient(135deg,#dcdcd4,#fff 70%);"></div>
<svg style="left:1395.3px;top:235.8px" width="10" height="10" viewBox="0 0 10 10"><path d="M1.500 4.800L4 7.600L8.500 2" stroke="#2ea028" stroke-width="2.200" fill="none"/></svg>
<svg style="left:500.5px;top:257.0px" width="6" height="6" viewBox="0 0 6 6"><circle cx="3" cy="3" r="1.800" fill="#333"/><circle cx="3.600" cy="2.300" r=".8" fill="#aaa"/></svg>
<span class="t" style="top:252.0px;font-size:12.6px;line-height:16.6px;left:514.6px;transform:scaleX(0.861);transform-origin:0 50%;">Hoechst Blue</span>
<span class="t" style="top:252.0px;font-size:12.6px;line-height:16.6px;left:803.7px;transform:scaleX(0.887);transform-origin:0 50%;">439</span>
<div style="left:939.2px;top:254.0px;width:12.6px;height:12.6px;border:1.300px solid #3a5a80;background:linear-gradient(135deg,#dcdcd4,#fff 70%);"></div>
<div style="left:1090.7px;top:254.0px;width:12.6px;height:12.6px;border:1.300px solid #3a5a80;background:linear-gradient(135deg,#dcdcd4,#fff 70%);"></div>
<svg style="left:1092.0px;top:255.3px" width="10" height="10" viewBox="0 0 10 10"><path d="M1.500 4.800L4 7.600L8.500 2" stroke="#2ea028" stroke-width="2.200" fill="none"/></svg>
<div style="left:1243.1px;top:254.0px;width:12.6px;height:12.6px;border:1.300px solid #3a5a80;background:linear-gradient(135deg,#dcdcd4,#fff 70%);"></div>
<div style="left:1394.0px;top:254.0px;width:12.6px;height:12.6px;border:1.300px solid #3a5a80;background:linear-gradient(135deg,#dcdcd4,#fff 70%);"></div>
<svg style="left:1395.3px;top:255.3px" width="10" height="10" viewBox="0 0 10 10"><path d="M1.500 4.800L4 7.600L8.500 2" stroke="#2ea028" stroke-width="2.200" fill="none"/></svg>
<svg style="left:500.5px;top:276.4px" width="6" height="6" viewBox="0 0 6 6"><circle cx="3" cy="3" r="1.800" fill="#333"/><circle cx="3.600" cy="2.300" r=".8" fill="#aaa"/></svg>
<span class="t" style="top:271.4px;font-size:12.6px;line-height:16.6px;left:514.6px;transform:scaleX(0.859);transform-origin:0 50%;">Hoechst Red</span>
<span class="t" style="top:271.4px;font-size:12.6px;line-height:16.6px;left:803.7px;transform:scaleX(0.887);transform-origin:0 50%;">771</span>
<div style="left:939.2px;top:273.4px;width:12.6px;height:12.6px;border:1.300px solid #3a5a80;background:linear-gradient(135deg,#dcdcd4,#fff 70%);"></div>
<div style="left:1090.7px;top:273.4px;width:12.6px;height:12.6px;border:1.300px solid #3a5a80;background:linear-gradient(135deg,#dcdcd4,#fff 70%);"></div>
<svg style="left:1092.0px;top:274.7px" width="10" height="10" viewBox="0 0 10 10"><path d="M1.500 4.800L4 7.600L8.500 2" stroke="#2ea028" stroke-width="2.200" fill="none"/></svg>
<div style="left:1243.1px;top:273.4px;width:12.6px;height:12.6px;border:1.300px solid #3a5a80;background:linear-gradient(135deg,#dcdcd4,#fff 70%);"></div>
<div style="left:1394.0px;top:273.4px;width:12.6px;height:12.6px;border:1.300px solid #3a5a80;background:linear-gradient(135deg,#dcdcd4,#fff 70%);"></div>
<svg style="left:1395.3px;top:274.7px" width="10" height="10" viewBox="0 0 10 10"><path d="M1.500 4.800L4 7.600L8.500 2" stroke="#2ea028" stroke-width="2.200" fill="none"/></svg>
<svg style="left:500.5px;top:295.8px" width="6" height="6" viewBox="0 0 6 6"><circle cx="3" cy="3" r="1.800" fill="#333"/><circle cx="3.600" cy="2.300" r=".8" fill="#aaa"/></svg>
<span class="t" style="top:290.8px;font-size:12.6px;line-height:16.6px;left:514.6px;transform:scaleX(0.774);transform-origin:0 50%;">PI</span>
<span class="t" style="top:290.8px;font-size:12.6px;line-height:16.6px;left:803.7px;transform:scaleX(0.887);transform-origin:0 50%;">420</span>
<div style="left:939.2px;top:292.8px;width:12.6px;height:12.6px;border:1.300px solid #3a5a80;background:linear-gradient(135deg,#dcdcd4,#fff 70%);"></div>
<svg style="left:940.5px;top:294.1px" width="10" height="10" viewBox="0 0 10 10"><path d="M1.500 4.800L4 7.600L8.500 2" stroke="#2ea028" stroke-width="2.200" fill="none"/></svg>
<div style="left:1090.7px;top:292.8px;width:12.6px;height:12.6px;border:1.300px solid #3a5a80;background:linear-gradient(135deg,#dcdcd4,#fff 70%);"></div>
<svg style="left:1092.0px;top:294.1px" width="10" height="10" viewBox="0 0 10 10"><path d="M1.500 4.800L4 7.600L8.500 2" stroke="#2ea028" stroke-width="2.200" fill="none"/></svg>
<div style="left:1243.1px;top:292.8px;width:12.6px;height:12.6px;border:1.300px solid #3a5a80;background:linear-gradient(135deg,#dcdcd4,#fff 70%);"></div>
<div style="left:1394.0px;top:292.8px;width:12.6px;height:12.6px;border:1.300px solid #3a5a80;background:linear-gradient(135deg,#dcdcd4,#fff 70%);"></div>
<svg style="left:1395.3px;top:294.1px" width="10" height="10" viewBox="0 0 10 10"><path d="M1.500 4.800L4 7.600L8.500 2" stroke="#2ea028" stroke-width="2.200" fill="none"/></svg>
<div style="left:513.7px;top:230.0px;width:962.1px;height:1.0px;background:#8f8f8d;"></div>
<div style="left:513.7px;top:250.0px;width:962.1px;height:1.0px;background:#8f8f8d;"></div>
<div style="left:513.7px;top:269.0px;width:962.1px;height:1.0px;background:#8f8f8d;"></div>
<div style="left:513.7px;top:289.0px;width:962.1px;height:1.0px;background:#8f8f8d;"></div>
<div style="left:513.7px;top:308.0px;width:962.1px;height:1.0px;background:#8f8f8d;"></div>
<div style="left:801.0px;top:211.4px;width:1.0px;height:97.2px;background:#a4a4a0;"></div>
<div style="left:869.0px;top:211.4px;width:1.0px;height:97.2px;background:#a4a4a0;"></div>
<div style="left:1021.0px;top:211.4px;width:1.0px;height:97.2px;background:#a4a4a0;"></div>
<div style="left:1171.0px;top:211.4px;width:1.0px;height:97.2px;background:#a4a4a0;"></div>
<div style="left:1324.0px;top:211.4px;width:1.0px;height:97.2px;background:#a4a4a0;"></div>
<div style="left:1475.0px;top:211.4px;width:1.0px;height:97.2px;background:#a4a4a0;"></div>
<div style="left:1476.5px;top:211.4px;width:17.1px;height:204.2px;background:#fbfbf6;"></div>
<div style="left:1477.5px;top:212.8px;width:15.5px;height:16.4px;background:linear-gradient(90deg,#cfdcfa,#bccbf4);border:1px solid #eef2fc;border-radius:2px;box-shadow:0 0 0 .5px #9fb0dc;"></div>
<svg style="left:1477.5px;top:212.8px" width="15.5" height="16.4" viewBox="0 0 15.5 16.4"><path d="M4.2 10.0L7.8 6.4L11.2 10.0" stroke="#3a55a0" stroke-width="2.100" fill="none"/></svg>
<div style="left:1477.5px;top:398.5px;width:15.5px;height:16.3px;background:linear-gradient(90deg,#cfdcfa,#bccbf4);border:1px solid #eef2fc;border-radius:2px;box-shadow:0 0 0 .5px #9fb0dc;"></div>
<svg style="left:1477.5px;top:398.5px" width="15.5" height="16.3" viewBox="0 0 15.5 16.3"><path d="M4.2 6.4L7.8 10.0L11.2 6.4" stroke="#3a55a0" stroke-width="2.100" fill="none"/></svg>
<div style="left:493.5px;top:430.0px;width:493.7px;height:19.4px;border:1.200px solid #16397a;border-radius:3.500px;background:linear-gradient(#ffffff,#f4f3ee 60%,#dcdad0);"></div>
<span class="t" style="top:431.7px;font-size:12.6px;line-height:16.6px;color:#000;left:740.4px;transform:translateX(-50%) scaleX(0.845);transform-origin:50% 50%;">Add</span>
<div style="left:999.4px;top:430.0px;width:493.9px;height:19.4px;border:1.200px solid #16397a;border-radius:3.500px;background:linear-gradient(#ffffff,#f4f3ee 60%,#dcdad0);"></div>
<span class="t" style="top:431.7px;font-size:12.6px;line-height:16.6px;color:#000;left:1246.3px;transform:translateX(-50%) scaleX(0.859);transform-origin:50% 50%;">Delete</span>
<div style="left:480.2px;top:465.0px;width:1027.6px;height:27.5px;background:#ece9d8;border-top:1.500px solid #8d8a7a;border-left:1px solid #a5a292;border-bottom:1px solid #fff;"></div>
<span class="t" style="top:470.9px;font-size:12.6px;line-height:16.6px;left:486.5px;transform:scaleX(0.885);transform-origin:0 50%;">Cytometer Connected</span>
<svg style="left:580.0px;top:180.0px" width="60" height="56" viewBox="0 0 60 56"><path d="M50.300 48.500L17 15" stroke="#e0141c" stroke-width="5" stroke-linecap="butt"/><path d="M7.500 6.800L31 10.500L11 29z" fill="#e0141c"/></svg>
<div style="left:472.2px;top:508.2px;width:313.3px;height:400.3px;background:#6c87ce;border-radius:7px 7px 0 0;"></div>
<div style="left:472.2px;top:508.2px;width:313.3px;height:29.6px;border-radius:7px 7px 0 0;background:linear-gradient(#86a6e2 0%,#7c9cdc 12%,#7092d4 50%,#6c8cd0 85%,#6a88cc 100%);"></div>
<div style="left:477.0px;top:537.8px;width:303.7px;height:364.9px;background:#ece9d8;"></div>
<svg style="left:478.0px;top:515.8px" width="15" height="15" viewBox="0 0 16 16"><rect x="0.500" y="0.500" width="15" height="15" fill="#eef2fa" stroke="#3a5a90"/><circle cx="9.500" cy="6.500" r="4" fill="#f8fbff" stroke="#4a5aa0" stroke-width="1.300"/><path d="M6.500 9.500L2.500 13.500" stroke="#d88020" stroke-width="2.400" stroke-linecap="round"/></svg>
<span class="t" style="top:514.4px;font-size:14.5px;line-height:18.5px;color:#dde7fa;font-weight:bold;left:498.6px;transform:scaleX(0.939);transform-origin:0 50%;">Inspector - Tube_001</span>
<div style="left:759.6px;top:514.2px;width:20.6px;height:20.0px;border:1px solid #c9b4d4;border-radius:3.5px;background:linear-gradient(135deg,#c8788e,#b85070 50%,#ae4868);"></div>
<svg style="left:759.6px;top:514.2px" width="20.6" height="20.0" viewBox="0 0 20.6 20.0"><path d="M5.8 5.6L14.8 14.4M14.8 5.6L5.8 14.4" stroke="#fff" stroke-width="2.3" stroke-linecap="round"/></svg>
<div style="left:484.2px;top:566.2px;width:288.1px;height:328.4px;background:linear-gradient(#fdfdfb 0%,#fbfbf8 60%,#f3f2ea 100%);border:1px solid #919b9c;box-shadow:1px 1px 0 #c8c6b8;"></div>
<div style="left:485.8px;top:548.7px;width:34.0px;height:17.7px;background:linear-gradient(#fdfdfb,#f1f0e8 80%,#e4e2d6);border:1px solid #919b9c;border-bottom:none;border-radius:3px 3px 0 0;"></div>
<span class="t" style="top:550.2px;font-size:12.6px;line-height:16.6px;left:502.8px;transform:translateX(-50%) scaleX(0.857);transform-origin:50% 50%;">Tube</span>
<div style="left:521.7px;top:548.7px;width:40.0px;height:17.7px;background:linear-gradient(#fdfdfb,#f1f0e8 80%,#e4e2d6);border:1px solid #919b9c;border-bottom:none;border-radius:3px 3px 0 0;"></div>
<span class="t" style="top:550.2px;font-size:12.6px;line-height:16.6px;left:541.7px;transform:translateX(-50%) scaleX(0.866);transform-origin:50% 50%;">Labels</span>
<div style="left:563.4px;top:548.7px;width:31.1px;height:17.7px;background:linear-gradient(#fdfdfb,#f1f0e8 80%,#e4e2d6);border:1px solid #919b9c;border-bottom:none;border-radius:3px 3px 0 0;"></div>
<span class="t" style="top:550.2px;font-size:12.6px;line-height:16.6px;left:579.0px;transform:translateX(-50%) scaleX(0.849);transform-origin:50% 50%;">Acq.</span>
<div style="left:595.0px;top:545.8px;width:61.4px;height:21.8px;background:#fcfcfa;border:1px solid #919b9c;border-bottom:none;border-radius:3px 3px 0 0;"></div>
<div style="left:595.0px;top:545.8px;width:61.4px;height:2.2px;background:#e8a838;border-radius:3px 3px 0 0;border:1px solid #d89020;border-bottom:none;"></div>
<span class="t" style="top:547.7px;font-size:12.6px;line-height:16.6px;left:625.7px;transform:translateX(-50%) scaleX(0.87);transform-origin:50% 50%;">Keywords</span>
<div style="left:753.4px;top:572.5px;width:14.9px;height:281.0px;background:#f7f7f1;"></div>
<div style="left:753.8px;top:572.8px;width:14.2px;height:15.2px;background:linear-gradient(90deg,#cfdcfa,#bccbf4);border:1px solid #eef2fc;border-radius:2px;box-shadow:0 0 0 .5px #9fb0dc;"></div>
<svg style="left:753.8px;top:572.8px" width="14.2" height="15.2" viewBox="0 0 14.2 15.2"><path d="M3.6 9.4L7.1 5.8L10.6 9.4" stroke="#3a55a0" stroke-width="2.100" fill="none"/></svg>
<div style="left:753.8px;top:838.0px;width:14.2px;height:15.2px;background:linear-gradient(90deg,#cfdcfa,#bccbf4);border:1px solid #eef2fc;border-radius:2px;box-shadow:0 0 0 .5px #9fb0dc;"></div>
<svg style="left:753.8px;top:838.0px" width="14.2" height="15.2" viewBox="0 0 14.2 15.2"><path d="M3.6 5.8L7.1 9.4L10.6 5.8" stroke="#3a55a0" stroke-width="2.100" fill="none"/></svg>
<div style="left:753.8px;top:590.5px;width:14.2px;height:111.0px;background:linear-gradient(90deg,#cddafa,#b9c9f4);border:1px solid #eef2fc;border-radius:2px;box-shadow:0 0 0 .5px #9fb0dc;"></div>
<div style="left:757.5px;top:641.0px;width:7.0px;height:1.0px;background:#eef3fe;"></div>
<div style="left:757.5px;top:643.2px;width:7.0px;height:1.0px;background:#eef3fe;"></div>
<div style="left:757.5px;top:645.4px;width:7.0px;height:1.0px;background:#eef3fe;"></div>
<div style="left:757.5px;top:647.6px;width:7.0px;height:1.0px;background:#eef3fe;"></div>
<div style="left:485px;top:576.0px;width:267px;height:167.0px;overflow:hidden;">
<div style="left:5.5px;top:10.0px;width:259.2px;height:154.0px;border:1px solid #d0d0bf;border-radius:4px;"></div>
<div style="left:10.5px;top:2.0px;width:69.5px;height:16.0px;background:#fcfcfa;"></div>
<span class="t" style="top:1.9px;font-size:12.6px;line-height:16.6px;color:#1f4a9e;left:12.8px;transform:scaleX(0.864);transform-origin:0 50%;">20191118-SP</span>
<div style="left:10.3px;top:24.2px;width:248.5px;height:128.1px;background:#ebe8d7;"></div>
<span class="t" style="top:31.7px;font-size:12.6px;line-height:16.6px;left:37.0px;transform:translateX(-50%) scaleX(0.856);transform-origin:50% 50%;">Name</span>
<span class="t" style="top:31.7px;font-size:12.6px;line-height:16.6px;left:95.8px;transform:translateX(-50%) scaleX(0.858);transform-origin:50% 50%;">Value</span>
<span class="t" style="top:31.7px;font-size:12.6px;line-height:16.6px;left:156.0px;transform:translateX(-50%) scaleX(0.857);transform-origin:50% 50%;">Suffix</span>
<span class="t" style="top:31.7px;font-size:12.6px;line-height:16.6px;left:222.8px;transform:translateX(-50%) scaleX(0.866);transform-origin:50% 50%;">Descri…</span>
<div style="left:71.8px;top:31.0px;width:1.0px;height:17.0px;background:#cfccba;"></div>
<div style="left:72.8px;top:31.0px;width:1.0px;height:17.0px;background:#fbfaf4;"></div>
<div style="left:131.0px;top:31.0px;width:1.0px;height:17.0px;background:#cfccba;"></div>
<div style="left:132.0px;top:31.0px;width:1.0px;height:17.0px;background:#fbfaf4;"></div>
<div style="left:191.2px;top:31.0px;width:1.0px;height:17.0px;background:#cfccba;"></div>
<div style="left:192.2px;top:31.0px;width:1.0px;height:17.0px;background:#fbfaf4;"></div>
<div style="left:250.7px;top:31.0px;width:1.0px;height:17.0px;background:#cfccba;"></div>
<div style="left:251.7px;top:31.0px;width:1.0px;height:17.0px;background:#fbfaf4;"></div>
<div style="left:15.2px;top:46.6px;width:238.4px;height:2.2px;background:linear-gradient(#d9d6c4,#c8c5b2);"></div>
<div style="left:15.2px;top:49.0px;width:238.4px;height:99.0px;background:#fff;"></div>
<div style="left:15.2px;top:49.2px;width:59.0px;height:16px;overflow:hidden;">
<span class="t" style="top:1.1px;font-size:12.6px;line-height:16.6px;color:#b4b4b4;left:1.2px;transform:scaleX(0.78);transform-origin:0 50%;">CST SETUP</span>
</div>
<div style="left:74.2px;top:49.2px;width:59.2px;height:16px;overflow:hidden;">
<span class="t" style="top:1.1px;font-size:12.6px;line-height:16.6px;color:#b4b4b4;left:1.2px;transform:scaleX(0.774);transform-origin:0 50%;">SUCCESS</span>
</div>
<div style="left:193.6px;top:49.2px;width:59.5px;height:16px;overflow:hidden;">
<span class="t" style="top:1.1px;font-size:12.6px;line-height:16.6px;color:#b4b4b4;left:1.2px;transform:scaleX(0.869);transform-origin:0 50%;">Cytometer</span>
</div>
<div style="left:15.2px;top:65.8px;width:59.0px;height:16px;overflow:hidden;">
<span class="t" style="top:1.1px;font-size:12.6px;line-height:16.6px;color:#b4b4b4;left:1.2px;transform:scaleX(0.78);transform-origin:0 50%;">CST BEADS</span>
</div>
<div style="left:74.2px;top:65.8px;width:59.2px;height:16px;overflow:hidden;">
<span class="t" style="top:1.1px;font-size:12.6px;line-height:16.6px;color:#b4b4b4;left:1.2px;transform:scaleX(0.887);transform-origin:0 50%;">25720</span>
</div>
<div style="left:193.6px;top:65.8px;width:59.5px;height:16px;overflow:hidden;">
<span class="t" style="top:1.1px;font-size:12.6px;line-height:16.6px;color:#b4b4b4;left:1.2px;transform:scaleX(0.821);transform-origin:0 50%;">Lot ID</span>
</div>
<div style="left:15.2px;top:82.2px;width:59.0px;height:16px;overflow:hidden;">
<span class="t" style="top:1.1px;font-size:12.6px;line-height:16.6px;color:#b4b4b4;left:1.2px;transform:scaleX(0.774);transform-origin:0 50%;">CYTOMETE</span>
</div>
<div style="left:74.2px;top:82.2px;width:59.2px;height:16px;overflow:hidden;">
<span class="t" style="top:1.1px;font-size:12.6px;line-height:16.6px;color:#b4b4b4;left:1.2px;transform:scaleX(0.84);transform-origin:0 50%;">SP- 5-Blue</span>
</div>
<div style="left:193.6px;top:82.2px;width:59.5px;height:16px;overflow:hidden;">
<span class="t" style="top:1.1px;font-size:12.6px;line-height:16.6px;color:#b4b4b4;left:1.2px;transform:scaleX(0.869);transform-origin:0 50%;">Cytometer</span>
</div>
<div style="left:15.2px;top:98.8px;width:59.0px;height:16px;overflow:hidden;">
<span class="t" style="top:1.1px;font-size:12.6px;line-height:16.6px;color:#b4b4b4;left:1.2px;transform:scaleX(0.774);transform-origin:0 50%;">CYTOMETE</span>
</div>
<div style="left:74.2px;top:98.8px;width:59.2px;height:16px;overflow:hidden;">
<span class="t" style="top:1.1px;font-size:12.6px;line-height:16.6px;color:#b4b4b4;left:1.2px;transform:scaleX(0.887);transform-origin:0 50%;">07/04/201</span>
</div>
<div style="left:193.6px;top:98.8px;width:59.5px;height:16px;overflow:hidden;">
<span class="t" style="top:1.1px;font-size:12.6px;line-height:16.6px;color:#b4b4b4;left:1.2px;transform:scaleX(0.869);transform-origin:0 50%;">Cytometer</span>
</div>
<div style="left:15.2px;top:115.2px;width:59.0px;height:16px;overflow:hidden;">
<span class="t" style="top:1.1px;font-size:12.6px;line-height:16.6px;color:#b4b4b4;left:1.2px;transform:scaleX(0.78);transform-origin:0 50%;">CST SETUP</span>
</div>
<div style="left:74.2px;top:115.2px;width:59.2px;height:16px;overflow:hidden;">
<span class="t" style="top:1.1px;font-size:12.6px;line-height:16.6px;color:#b4b4b4;left:1.2px;transform:scaleX(0.887);transform-origin:0 50%;">10/16/201</span>
</div>
<div style="left:193.6px;top:115.2px;width:59.5px;height:16px;overflow:hidden;">
<span class="t" style="top:1.1px;font-size:12.6px;line-height:16.6px;color:#b4b4b4;left:1.2px;transform:scaleX(0.867);transform-origin:0 50%;">Date and</span>
</div>
<div style="left:15.2px;top:131.8px;width:59.0px;height:16px;overflow:hidden;">
<span class="t" style="top:1.1px;font-size:12.6px;line-height:16.6px;color:#b4b4b4;left:1.2px;transform:scaleX(0.774);transform-origin:0 50%;">CST</span>
</div>
<div style="left:74.2px;top:131.8px;width:59.2px;height:16px;overflow:hidden;">
<span class="t" style="top:1.1px;font-size:12.6px;line-height:16.6px;color:#b4b4b4;left:1.2px;transform:scaleX(0.887);transform-origin:0 50%;">10/16/201</span>
</div>
<div style="left:193.6px;top:131.8px;width:59.5px;height:16px;overflow:hidden;">
<span class="t" style="top:1.1px;font-size:12.6px;line-height:16.6px;color:#b4b4b4;left:1.2px;transform:scaleX(0.867);transform-origin:0 50%;">Date and</span>
</div>
<div style="left:15.2px;top:48.0px;width:238.4px;height:1.2px;background:#8e8e8c;"></div>
<div style="left:15.2px;top:65.0px;width:238.4px;height:1.2px;background:#8e8e8c;"></div>
<div style="left:15.2px;top:82.0px;width:238.4px;height:1.2px;background:#8e8e8c;"></div>
<div style="left:15.2px;top:98.0px;width:238.4px;height:1.2px;background:#8e8e8c;"></div>
<div style="left:15.2px;top:114.0px;width:238.4px;height:1.2px;background:#8e8e8c;"></div>
<div style="left:15.2px;top:131.0px;width:238.4px;height:1.2px;background:#8e8e8c;"></div>
<div style="left:15.2px;top:148.0px;width:238.4px;height:1.2px;background:#8e8e8c;"></div>
<div style="left:15.0px;top:49.0px;width:1.2px;height:99.0px;background:#8e8e8c;"></div>
<div style="left:74.0px;top:49.0px;width:1.2px;height:99.0px;background:#8e8e8c;"></div>
<div style="left:133.0px;top:49.0px;width:1.2px;height:99.0px;background:#8e8e8c;"></div>
<div style="left:193.0px;top:49.0px;width:1.2px;height:99.0px;background:#8e8e8c;"></div>
<div style="left:253.0px;top:49.0px;width:1.2px;height:99.0px;background:#8e8e8c;"></div>
</div>
<div style="left:485px;top:747.5px;width:267px;height:106.0px;overflow:hidden;">
<div style="left:5.5px;top:10.0px;width:259.2px;height:154.0px;border:1px solid #d0d0bf;border-radius:4px;"></div>
<div style="left:10.5px;top:2.0px;width:73.7px;height:16.0px;background:#fcfcfa;"></div>
<span class="t" style="top:1.9px;font-size:12.6px;line-height:16.6px;color:#1f4a9e;left:12.8px;transform:scaleX(0.823);transform-origin:0 50%;">Specimen_001</span>
<div style="left:10.3px;top:24.2px;width:248.5px;height:128.1px;background:#ebe8d7;"></div>
<span class="t" style="top:31.7px;font-size:12.6px;line-height:16.6px;left:37.0px;transform:translateX(-50%) scaleX(0.856);transform-origin:50% 50%;">Name</span>
<span class="t" style="top:31.7px;font-size:12.6px;line-height:16.6px;left:95.8px;transform:translateX(-50%) scaleX(0.858);transform-origin:50% 50%;">Value</span>
<span class="t" style="top:31.7px;font-size:12.6px;line-height:16.6px;left:156.0px;transform:translateX(-50%) scaleX(0.857);transform-origin:50% 50%;">Suffix</span>
<span class="t" style="top:31.7px;font-size:12.6px;line-height:16.6px;left:222.8px;transform:translateX(-50%) scaleX(0.866);transform-origin:50% 50%;">Descri…</span>
<div style="left:71.8px;top:31.0px;width:1.0px;height:17.0px;background:#cfccba;"></div>
<div style="left:72.8px;top:31.0px;width:1.0px;height:17.0px;background:#fbfaf4;"></div>
<div style="left:131.0px;top:31.0px;width:1.0px;height:17.0px;background:#cfccba;"></div>
<div style="left:132.0px;top:31.0px;width:1.0px;height:17.0px;background:#fbfaf4;"></div>
<div style="left:191.2px;top:31.0px;width:1.0px;height:17.0px;background:#cfccba;"></div>
<div style="left:192.2px;top:31.0px;width:1.0px;height:17.0px;background:#fbfaf4;"></div>
<div style="left:250.7px;top:31.0px;width:1.0px;height:17.0px;background:#cfccba;"></div>
<div style="left:251.7px;top:31.0px;width:1.0px;height:17.0px;background:#fbfaf4;"></div>
<div style="left:15.2px;top:46.6px;width:238.4px;height:2.2px;background:linear-gradient(#d9d6c4,#c8c5b2);"></div>
<div style="left:15.2px;top:49.0px;width:238.4px;height:99.0px;background:#fff;"></div>
<div style="left:15.2px;top:49.2px;width:59.0px;height:16px;overflow:hidden;">
<span class="t" style="top:1.1px;font-size:12.6px;line-height:16.6px;color:#b4b4b4;left:1.2px;transform:scaleX(0.78);transform-origin:0 50%;">CST SETUP</span>
</div>
<div style="left:193.6px;top:49.2px;width:59.5px;height:16px;overflow:hidden;">
<span class="t" style="top:1.1px;font-size:12.6px;line-height:16.6px;color:#b4b4b4;left:1.2px;transform:scaleX(0.869);transform-origin:0 50%;">Cytometer</span>
</div>
<div style="left:15.2px;top:65.8px;width:59.0px;height:16px;overflow:hidden;">
<span class="t" style="top:1.1px;font-size:12.6px;line-height:16.6px;color:#b4b4b4;left:1.2px;transform:scaleX(0.78);transform-origin:0 50%;">CST BEADS</span>
</div>
<div style="left:193.6px;top:65.8px;width:59.5px;height:16px;overflow:hidden;">
<span class="t" style="top:1.1px;font-size:12.6px;line-height:16.6px;color:#b4b4b4;left:1.2px;transform:scaleX(0.821);transform-origin:0 50%;">Lot ID</span>
</div>
<div style="left:15.2px;top:82.2px;width:59.0px;height:16px;overflow:hidden;">
<span class="t" style="top:1.1px;font-size:12.6px;line-height:16.6px;color:#b4b4b4;left:1.2px;transform:scaleX(0.774);transform-origin:0 50%;">CYTOMETE</span>
</div>
<div style="left:193.6px;top:82.2px;width:59.5px;height:16px;overflow:hidden;">
<span class="t" style="top:1.1px;font-size:12.6px;line-height:16.6px;color:#b4b4b4;left:1.2px;transform:scaleX(0.869);transform-origin:0 50%;">Cytometer</span>
</div>
<div style="left:15.2px;top:98.8px;width:59.0px;height:16px;overflow:hidden;">
<span class="t" style="top:1.1px;font-size:12.6px;line-height:16.6px;color:#b4b4b4;left:1.2px;transform:scaleX(0.774);transform-origin:0 50%;">CYTOMETE</span>
</div>
<div style="left:193.6px;top:98.8px;width:59.5px;height:16px;overflow:hidden;">
<span class="t" style="top:1.1px;font-size:12.6px;line-height:16.6px;color:#b4b4b4;left:1.2px;transform:scaleX(0.869);transform-origin:0 50%;">Cytometer</span>
</div>
<div style="left:15.2px;top:115.2px;width:59.0px;height:16px;overflow:hidden;">
<span class="t" style="top:1.1px;font-size:12.6px;line-height:16.6px;color:#b4b4b4;left:1.2px;transform:scaleX(0.78);transform-origin:0 50%;">CST SETUP</span>
</div>
<div style="left:193.6px;top:115.2px;width:59.5px;height:16px;overflow:hidden;">
<span class="t" style="top:1.1px;font-size:12.6px;line-height:16.6px;color:#b4b4b4;left:1.2px;transform:scaleX(0.867);transform-origin:0 50%;">Date and</span>
</div>
<div style="left:15.2px;top:131.8px;width:59.0px;height:16px;overflow:hidden;">
<span class="t" style="top:1.1px;font-size:12.6px;line-height:16.6px;color:#b4b4b4;left:1.2px;transform:scaleX(0.774);transform-origin:0 50%;">CST</span>
</div>
<div style="left:193.6px;top:131.8px;width:59.5px;height:16px;overflow:hidden;">
<span class="t" style="top:1.1px;font-size:12.6px;line-height:16.6px;color:#b4b4b4;left:1.2px;transform:scaleX(0.867);transform-origin:0 50%;">Date and</span>
</div>
<div style="left:15.2px;top:48.5px;width:238.4px;height:1.2px;background:#8e8e8c;"></div>
<div style="left:15.2px;top:64.5px;width:238.4px;height:1.2px;background:#8e8e8c;"></div>
<div style="left:15.2px;top:81.5px;width:238.4px;height:1.2px;background:#8e8e8c;"></div>
<div style="left:15.2px;top:98.5px;width:238.4px;height:1.2px;background:#8e8e8c;"></div>
<div style="left:15.2px;top:114.5px;width:238.4px;height:1.2px;background:#8e8e8c;"></div>
<div style="left:15.2px;top:130.5px;width:238.4px;height:1.2px;background:#8e8e8c;"></div>
<div style="left:15.2px;top:147.5px;width:238.4px;height:1.2px;background:#8e8e8c;"></div>
<div style="left:15.0px;top:49.0px;width:1.2px;height:99.0px;background:#8e8e8c;"></div>
<div style="left:74.0px;top:49.0px;width:1.2px;height:99.0px;background:#8e8e8c;"></div>
<div style="left:133.0px;top:49.0px;width:1.2px;height:99.0px;background:#8e8e8c;"></div>
<div style="left:193.0px;top:49.0px;width:1.2px;height:99.0px;background:#8e8e8c;"></div>
<div style="left:253.0px;top:49.0px;width:1.2px;height:99.0px;background:#8e8e8c;"></div>
</div>
<div style="left:713.2px;top:864.6px;width:50.0px;height:21.8px;border:1.200px solid #16397a;border-radius:3.500px;background:linear-gradient(#ffffff,#f4f3ee 60%,#dcdad0);"></div>
<span class="t" style="top:867.5px;font-size:12.6px;line-height:16.6px;color:#000;left:738.2px;transform:translateX(-50%) scaleX(0.843);transform-origin:50% 50%;">Edit</span>
<div style="left:792.3px;top:508.5px;width:715.3px;height:390.8px;background:#6c87ce;border-radius:7px 7px 0 0;"></div>
<div style="left:792.3px;top:508.5px;width:715.3px;height:29.2px;border-radius:7px 7px 0 0;background:linear-gradient(#86a6e2 0%,#7c9cdc 12%,#7092d4 50%,#6c8cd0 85%,#6a88cc 100%);"></div>
<div style="left:796.9px;top:537.7px;width:706.1px;height:356.0px;background:#ece9d8;"></div>
<svg style="left:798.3px;top:515.8px" width="16" height="15" viewBox="0 0 16 15"><rect x="0.500" y="0.500" width="15" height="14" fill="#e8eaf2" stroke="#3a5a90"/><path d="M3.500 2.500v10M7.500 2.500v10" stroke="#3e4a8a" stroke-width="1.800" stroke-dasharray="2 1"/><circle cx="12" cy="4" r="1.500" fill="#2a9a2a"/><circle cx="12" cy="7.500" r="1.500" fill="#e8c010"/><circle cx="12" cy="11" r="1.500" fill="#d02818"/></svg>
<span class="t" style="top:514.5px;font-size:14.5px;line-height:18.5px;color:#dde7fa;font-weight:bold;left:818.5px;transform:scaleX(0.885);transform-origin:0 50%;">Acquisition Dashboard</span>
<div style="left:1482.0px;top:514.6px;width:19.6px;height:19.6px;border:1px solid #c9b4d4;border-radius:3.5px;background:linear-gradient(135deg,#c8788e,#b85070 50%,#ae4868);"></div>
<svg style="left:1482.0px;top:514.6px" width="19.6" height="19.6" viewBox="0 0 19.6 19.6"><path d="M5.5 5.5L14.1 14.1M14.1 5.5L5.5 14.1" stroke="#fff" stroke-width="2.3" stroke-linecap="round"/></svg>
<div style="left:799.6px;top:547.8px;width:700.3px;height:58.6px;border:1px solid #dddac9;border-radius:4.500px;box-shadow:inset 1px 1px 0 rgba(255,255,255,.45);"></div>
<div style="left:805.5px;top:540.8px;width:81.4px;height:14.0px;background:#ece9d8;"></div>
<span class="t" style="top:539.7px;font-size:12.6px;line-height:16.6px;color:#1f4a9e;left:807.6px;transform:scaleX(0.914);transform-origin:0 50%;">Current Activity</span>
<div style="left:799.6px;top:618.0px;width:700.3px;height:58.2px;border:1px solid #dddac9;border-radius:4.500px;box-shadow:inset 1px 1px 0 rgba(255,255,255,.45);"></div>
<div style="left:805.5px;top:611.0px;width:71.9px;height:14.0px;background:#ece9d8;"></div>
<span class="t" style="top:609.9px;font-size:12.6px;line-height:16.6px;color:#1f4a9e;left:807.6px;transform:scaleX(0.836);transform-origin:0 50%;">Basic Controls</span>
<div style="left:799.6px;top:688.8px;width:700.3px;height:58.0px;border:1px solid #dddac9;border-radius:4.500px;box-shadow:inset 1px 1px 0 rgba(255,255,255,.45);"></div>
<div style="left:805.5px;top:681.8px;width:71.5px;height:14.0px;background:#ece9d8;"></div>
<span class="t" style="top:680.7px;font-size:12.6px;line-height:16.6px;color:#1f4a9e;left:807.6px;transform:scaleX(0.853);transform-origin:0 50%;">Plate Controls</span>
<div style="left:799.6px;top:759.3px;width:700.3px;height:58.7px;border:1px solid #dddac9;border-radius:4.500px;box-shadow:inset 1px 1px 0 rgba(255,255,255,.45);"></div>
<div style="left:805.5px;top:752.3px;width:87.3px;height:14.0px;background:#ece9d8;"></div>
<span class="t" style="top:751.2px;font-size:12.6px;line-height:16.6px;color:#1f4a9e;left:807.6px;transform:scaleX(0.856);transform-origin:0 50%;">Acquisition Setup</span>
<div style="left:799.6px;top:830.0px;width:700.3px;height:58.4px;border:1px solid #dddac9;border-radius:4.500px;box-shadow:inset 1px 1px 0 rgba(255,255,255,.45);"></div>
<div style="left:805.5px;top:823.0px;width:90.3px;height:14.0px;background:#ece9d8;"></div>
<span class="t" style="top:821.9px;font-size:12.6px;line-height:16.6px;color:#1f4a9e;left:807.6px;transform:scaleX(0.862);transform-origin:0 50%;">Acquisition Status</span>
<span class="t" style="top:562.4px;font-size:13.5px;line-height:17.5px;left:804.9px;transform:scaleX(0.902);transform-origin:0 50%;">Active Tube/Well</span>
<span class="t" style="top:562.4px;font-size:13.5px;line-height:17.5px;left:978.0px;transform:scaleX(0.932);transform-origin:0 50%;">Threshold Rate</span>
<span class="t" style="top:562.4px;font-size:13.5px;line-height:17.5px;left:1150.7px;transform:scaleX(0.911);transform-origin:0 50%;">Stopping Gate Events</span>
<span class="t" style="top:562.4px;font-size:13.5px;line-height:17.5px;left:1323.4px;transform:scaleX(0.959);transform-origin:0 50%;">Elapsed Time</span>
<div style="left:805.6px;top:582.6px;width:168.8px;height:17.0px;background:#fff;border:1.500px solid #7a8290;border-right-color:#b8bcc4;border-bottom-color:#b8bcc4;border-radius:2px;"></div>
<span class="t" style="top:580.0px;font-size:14.5px;line-height:18.0px;color:#2b5cae;font-weight:bold;left:855.4px;transform:scaleX(1.014);transform-origin:0 50%;">Tube_001</span>
<span class="t" style="top:582.9px;font-size:16px;line-height:18.0px;font-weight:bold;left:978.0px;transform:scaleX(0.988);transform-origin:0 50%;">0 evt/s</span>
<span class="t" style="top:582.9px;font-size:16px;line-height:18.0px;font-weight:bold;left:1150.3px;transform:scaleX(1.031);transform-origin:0 50%;">0 evt</span>
<span class="t" style="top:582.9px;font-size:16px;line-height:18.0px;font-weight:bold;left:1323.4px;transform:scaleX(1.043);transform-origin:0 50%;">00:00:00</span>
<div style="left:806.4px;top:632.4px;width:132.2px;height:37.1px;border:1.300px solid #16397a;border-radius:3.500px;background:linear-gradient(#ffffff 0%,#f6f5f0 55%,#e3e1d8 100%);box-shadow:inset -1px -1px 0 #cbc9bd;"></div>
<div style="left:944.5px;top:632.4px;width:132.2px;height:37.1px;border:1.300px solid #16397a;border-radius:3.500px;background:linear-gradient(#ffffff 0%,#f6f5f0 55%,#e3e1d8 100%);box-shadow:inset -1px -1px 0 #cbc9bd;"></div>
<div style="left:1082.3px;top:632.4px;width:132.2px;height:37.1px;border:1.300px solid #16397a;border-radius:3.500px;background:linear-gradient(#ffffff 0%,#f6f5f0 55%,#e3e1d8 100%);box-shadow:inset -1px -1px 0 #cbc9bd;"></div>
<div style="left:1220.5px;top:632.4px;width:132.1px;height:37.1px;border:1px solid #cfcdc0;border-radius:3.500px;background:#f1f0e9;"></div>
<svg style="left:836.5px;top:642.5px" width="16" height="17" viewBox="0 0 16 17"><path d="M0.500 8.500h4.500M3 6l2.500 2.500L3 11" stroke="#2a8a2a" stroke-width="1.800" fill="none"/><path d="M7 1.500h7M8.500 2v10.500a2 2 0 0 0 4 0V2" fill="#9aa2e6" stroke="#3a3a90" stroke-width="1.300"/></svg>
<span class="t" style="top:642.9px;font-size:12.6px;line-height:16.6px;left:856.6px;transform:scaleX(0.895);transform-origin:0 50%;">Next Tube</span>
<div style="left:970.0px;top:643.8px;width:14.2px;height:14.2px;background:linear-gradient(135deg,#6a9a6e,#4f7f55);border:1px solid #3f6a46;border-radius:1.500px;"></div>
<span class="t" style="top:642.9px;font-size:12.6px;line-height:16.6px;left:988.9px;transform:scaleX(0.866);transform-origin:0 50%;">Acquire Data</span>
<div style="left:1109.0px;top:643.8px;width:14.1px;height:14.2px;background:linear-gradient(135deg,#a8702e,#8c5a1e);border:1px solid #74480f;border-radius:1.500px;"></div>
<span class="t" style="top:642.9px;font-size:12.6px;line-height:16.6px;left:1127.2px;transform:scaleX(0.81);transform-origin:0 50%;">Record Data</span>
<svg style="left:1257.5px;top:642.5px" width="17" height="17" viewBox="0 0 17 17"><circle cx="8.500" cy="8.500" r="7.800" fill="#8e8e8c"/><path d="M5 8.500a3.500 3.500 0 1 1 1.200 2.600" stroke="#a9a9a6" stroke-width="1.400" fill="none"/></svg>
<span class="t" style="top:642.3px;font-size:12.6px;line-height:16.6px;color:#a2a29e;left:1276.8px;transform:scaleX(0.899);transform-origin:0 50%;">Restart</span>
<div style="left:806.4px;top:703.6px;width:132.1px;height:36.6px;border:1px solid #cfcdc0;border-radius:3.500px;background:#f1f0e9;"></div>
<div style="left:944.4px;top:703.6px;width:132.2px;height:36.6px;border:1px solid #cfcdc0;border-radius:3.500px;background:#f1f0e9;"></div>
<div style="left:1082.2px;top:703.6px;width:132.3px;height:36.6px;border:1px solid #cfcdc0;border-radius:3.500px;background:#f1f0e9;"></div>
<svg style="left:838.0px;top:712.5px" width="18" height="17" viewBox="0 0 18 17"><rect x="0.500" y="0.500" width="12" height="10" rx="1.500" fill="#8e8e8c"/><circle cx="11.500" cy="11" r="5" fill="#8e8e8c"/></svg>
<span class="t" style="top:712.5px;font-size:12.6px;line-height:16.6px;color:#a2a29e;left:857.6px;transform:scaleX(0.846);transform-origin:0 50%;">Run Plate</span>
<svg style="left:973.5px;top:712.5px" width="17" height="17" viewBox="0 0 17 17"><path d="M0.500 2l9 1v6l-6 1z" fill="#8e8e8c"/><circle cx="10" cy="10.500" r="5.500" fill="#8e8e8c"/></svg>
<span class="t" style="top:712.5px;font-size:12.6px;line-height:16.6px;color:#a2a29e;left:991.4px;transform:scaleX(0.863);transform-origin:0 50%;">Run Well(s)</span>
<svg style="left:1123.5px;top:712.0px" width="18" height="18" viewBox="0 0 18 18"><circle cx="9" cy="9" r="8.300" fill="#8e8e8c"/><path d="M7 5.500v7M11 5.500v7" stroke="#a4a4a0" stroke-width="1.600"/></svg>
<span class="t" style="top:712.5px;font-size:12.6px;line-height:16.6px;color:#a2a29e;left:1142.8px;transform:scaleX(0.823);transform-origin:0 50%;">Pause</span>
<span class="t" style="top:773.9px;font-size:12.6px;line-height:16.6px;left:804.5px;transform:scaleX(0.871);transform-origin:0 50%;">Stopping Gate:</span>
<span class="t" style="top:795.3px;font-size:12.6px;line-height:16.6px;left:804.5px;transform:scaleX(0.873);transform-origin:0 50%;">Storage Gate:</span>
<div style="left:920.4px;top:772.7px;width:110.4px;height:17.7px;background:#fff;border:1px solid #7f9db9;"></div>
<div style="left:1013.6px;top:774.0px;width:15.9px;height:15.1px;background:linear-gradient(90deg,#cfdcfa,#bccbf4);border:1px solid #eef2fc;border-radius:2px;box-shadow:0 0 0 .5px #9fb0dc;"></div>
<svg style="left:1013.6px;top:774.0px" width="15.9" height="15.1" viewBox="0 0 15.9 15.1"><path d="M4.5 5.8L8.0 9.4L11.5 5.8" stroke="#3a55a0" stroke-width="2.100" fill="none"/></svg>
<div style="left:923.9px;top:775.1px;width:13.8px;height:12.9px;background:#0a0606;"></div>
<span class="t" style="top:773.6px;font-size:12.6px;line-height:16.6px;left:941.7px;transform:scaleX(0.85);transform-origin:0 50%;">All Events</span>
<div style="left:920.4px;top:794.3px;width:110.4px;height:17.5px;background:#fff;border:1px solid #7f9db9;"></div>
<div style="left:1013.6px;top:795.6px;width:15.9px;height:14.9px;background:linear-gradient(90deg,#cfdcfa,#bccbf4);border:1px solid #eef2fc;border-radius:2px;box-shadow:0 0 0 .5px #9fb0dc;"></div>
<svg style="left:1013.6px;top:795.6px" width="15.9" height="14.9" viewBox="0 0 15.9 14.9"><path d="M4.5 5.7L8.0 9.3L11.5 5.7" stroke="#3a55a0" stroke-width="2.100" fill="none"/></svg>
<div style="left:923.9px;top:796.7px;width:13.8px;height:12.7px;background:#0a0606;"></div>
<span class="t" style="top:795.1px;font-size:12.6px;line-height:16.6px;left:941.7px;transform:scaleX(0.85);transform-origin:0 50%;">All Events</span>
<span class="t" style="top:773.9px;font-size:12.6px;line-height:16.6px;left:1033.3px;transform:scaleX(0.879);transform-origin:0 50%;">Events To Record:</span>
<span class="t" style="top:795.3px;font-size:12.6px;line-height:16.6px;left:1033.3px;transform:scaleX(0.873);transform-origin:0 50%;">Events To Display:</span>
<div style="left:1148.7px;top:772.7px;width:111.3px;height:17.7px;background:#fff;border:1px solid #7f9db9;"></div>
<div style="left:1242.8px;top:774.0px;width:15.9px;height:15.1px;background:linear-gradient(90deg,#cfdcfa,#bccbf4);border:1px solid #eef2fc;border-radius:2px;box-shadow:0 0 0 .5px #9fb0dc;"></div>
<svg style="left:1242.8px;top:774.0px" width="15.9" height="15.1" viewBox="0 0 15.9 15.1"><path d="M4.5 5.8L8.0 9.4L11.5 5.8" stroke="#3a55a0" stroke-width="2.100" fill="none"/></svg>
<span class="t" style="top:773.6px;font-size:12.6px;line-height:16.6px;left:1194.9px;transform:translateX(-50%) scaleX(0.887);transform-origin:50% 50%;">10000 evt</span>
<div style="left:1148.7px;top:794.3px;width:111.3px;height:17.5px;background:#fff;border:1px solid #7f9db9;"></div>
<div style="left:1242.8px;top:795.6px;width:15.9px;height:14.9px;background:linear-gradient(90deg,#cfdcfa,#bccbf4);border:1px solid #eef2fc;border-radius:2px;box-shadow:0 0 0 .5px #9fb0dc;"></div>
<svg style="left:1242.8px;top:795.6px" width="15.9" height="14.9" viewBox="0 0 15.9 14.9"><path d="M4.5 5.7L8.0 9.3L11.5 5.7" stroke="#3a55a0" stroke-width="2.100" fill="none"/></svg>
<span class="t" style="top:795.1px;font-size:12.6px;line-height:16.6px;left:1194.9px;transform:translateX(-50%) scaleX(0.887);transform-origin:50% 50%;">1000 evt</span>
<span class="t" style="top:773.9px;font-size:12.6px;line-height:16.6px;left:1262.7px;transform:scaleX(0.858);transform-origin:0 50%;">Stopping Time (sec):</span>
<div style="left:1377.8px;top:772.7px;width:86.2px;height:17.7px;background:#fff;border:1px solid #b8c4d4;border-top-color:#8a9ab4;"></div>
<span class="t" style="top:773.9px;font-size:12.6px;line-height:16.6px;left:1460.5px;transform:translateX(-100%) scaleX(0.887);transform-origin:100% 50%;">0</span>
<svg style="left:1465.0px;top:772.5px" width="12" height="18.5" viewBox="0 0 12 18.5"><rect x="0.500" y="0.500" width="11" height="8.200" rx="1.500" fill="#f4f4ee" stroke="#8a9ab8"/><rect x="0.500" y="9.800" width="11" height="8.200" rx="1.500" fill="#f4f4ee" stroke="#8a9ab8"/><path d="M3 6.300L6 2.800L9 6.300z" fill="#111"/><path d="M3 12.200L6 15.700L9 12.200z" fill="#111"/></svg>
<svg style="left:1478.0px;top:773.0px" width="10" height="18" viewBox="0 0 10 18"><rect x="0.500" y="0.500" width="9" height="17" rx="1" fill="#f4f4ee" stroke="#2a3a78"/><path d="M5 2.500v13M2.500 7h5" stroke="#111" stroke-width="1.700"/></svg>
<span class="t" style="top:844.1px;font-size:12.6px;line-height:16.6px;left:804.5px;transform:scaleX(0.857);transform-origin:0 50%;">Processed Events:</span>
<span class="t" style="top:863.6px;font-size:12.6px;line-height:16.6px;left:804.5px;transform:scaleX(0.869);transform-origin:0 50%;">Threshold Count:</span>
<span class="t" style="top:844.1px;font-size:12.6px;line-height:16.6px;left:1148.1px;transform:scaleX(0.88);transform-origin:0 50%;">Electronic Abort Rate:</span>
<span class="t" style="top:863.6px;font-size:12.6px;line-height:16.6px;left:1148.1px;transform:scaleX(0.883);transform-origin:0 50%;">Electronic Abort Count:</span>
<div style="left:1555.5px;top:115.3px;width:1409.3px;height:797.3px;background:#7d93d2;box-shadow:inset 0 0 0 1px #8ea4e0;"></div>
<div style="left:1560.2px;top:119.0px;width:1400.0px;height:789.2px;background:#ece9d8;"></div>
<div style="left:1560.2px;top:143.4px;width:1400.0px;height:1.8px;background:#8f8c7b;"></div>
<div style="left:1560.2px;top:145.2px;width:1400.0px;height:0.8px;background:#d8d5c4;"></div>
<div style="left:1560.8px;top:167.8px;width:1397.2px;height:6.2px;background:#91c8cd;border-top:1px solid #7fb4ba;"></div>
<div style="left:1561.4px;top:146.0px;width:101.2px;height:23.0px;background:#91c8cd;border-right:1px solid #7fb4ba;"></div>
<div style="left:1561.4px;top:146.0px;width:101.2px;height:2.0px;background:#e8a838;"></div>
<svg style="left:1568.0px;top:149.5px" width="16" height="16" viewBox="0 0 16 16"><rect x="0.800" y="0.800" width="10" height="13" fill="#f4f4fa" stroke="#5a5a90"/><rect x="2.300" y="2.300" width="3" height="3" fill="#6a7ac8"/><rect x="2.300" y="7.300" width="3" height="3" fill="#6a7ac8"/><rect x="6.800" y="1.800" width="3" height="4" fill="#4a3a9a"/><rect x="7.500" y="8" width="7.500" height="7" fill="#d08830" stroke="#80481a"/></svg>
<span class="t" style="top:149.0px;font-size:12.6px;line-height:16.6px;left:1587.6px;transform:scaleX(0.839);transform-origin:0 50%;">Global Sheet1</span>
<div style="left:1560.3px;top:174.0px;width:1397.5px;height:731.3px;background:#fcfcf8;border-left:1.500px solid #94abb8;border-right:1px solid #8aa8a4;border-bottom:1.500px solid #9aa892;"></div>
<div style="left:1561.8px;top:173.5px;width:685.2px;height:713.0px;background:#fff;"></div>
<div style="left:1590.0px;top:174.0px;width:1.0px;height:712.0px;background:repeating-linear-gradient(180deg,#b2b2b2 0,#b2b2b2 2px,transparent 2px,transparent 4px);"></div>
<div style="left:1616.0px;top:174.0px;width:1.0px;height:712.0px;background:repeating-linear-gradient(180deg,#b2b2b2 0,#b2b2b2 2px,transparent 2px,transparent 4px);"></div>
<div style="left:1642.0px;top:174.0px;width:1.0px;height:712.0px;background:repeating-linear-gradient(180deg,#b2b2b2 0,#b2b2b2 2px,transparent 2px,transparent 4px);"></div>
<div style="left:1668.0px;top:174.0px;width:1.0px;height:712.0px;background:#d4d4d4;"></div>
<div style="left:1695.0px;top:174.0px;width:1.0px;height:712.0px;background:repeating-linear-gradient(180deg,#b2b2b2 0,#b2b2b2 2px,transparent 2px,transparent 4px);"></div>
<div style="left:1721.0px;top:174.0px;width:1.0px;height:712.0px;background:repeating-linear-gradient(180deg,#b2b2b2 0,#b2b2b2 2px,transparent 2px,transparent 4px);"></div>
<div style="left:1747.0px;top:174.0px;width:1.0px;height:712.0px;background:repeating-linear-gradient(180deg,#b2b2b2 0,#b2b2b2 2px,transparent 2px,transparent 4px);"></div>
<div style="left:1774.0px;top:174.0px;width:1.0px;height:712.0px;background:#d4d4d4;"></div>
<div style="left:1800.0px;top:174.0px;width:1.0px;height:712.0px;background:repeating-linear-gradient(180deg,#b2b2b2 0,#b2b2b2 2px,transparent 2px,transparent 4px);"></div>
<div style="left:1826.0px;top:174.0px;width:1.0px;height:712.0px;background:repeating-linear-gradient(180deg,#b2b2b2 0,#b2b2b2 2px,transparent 2px,transparent 4px);"></div>
<div style="left:1853.0px;top:174.0px;width:1.0px;height:712.0px;background:repeating-linear-gradient(180deg,#b2b2b2 0,#b2b2b2 2px,transparent 2px,transparent 4px);"></div>
<div style="left:1879.0px;top:174.0px;width:1.0px;height:712.0px;background:#d4d4d4;"></div>
<div style="left:1905.0px;top:174.0px;width:1.0px;height:712.0px;background:repeating-linear-gradient(180deg,#b2b2b2 0,#b2b2b2 2px,transparent 2px,transparent 4px);"></div>
<div style="left:1932.0px;top:174.0px;width:1.0px;height:712.0px;background:repeating-linear-gradient(180deg,#b2b2b2 0,#b2b2b2 2px,transparent 2px,transparent 4px);"></div>
<div style="left:1958.0px;top:174.0px;width:1.0px;height:712.0px;background:repeating-linear-gradient(180deg,#b2b2b2 0,#b2b2b2 2px,transparent 2px,transparent 4px);"></div>
<div style="left:1984.0px;top:174.0px;width:1.0px;height:712.0px;background:#d4d4d4;"></div>
<div style="left:2010.0px;top:174.0px;width:1.0px;height:712.0px;background:repeating-linear-gradient(180deg,#b2b2b2 0,#b2b2b2 2px,transparent 2px,transparent 4px);"></div>
<div style="left:2037.0px;top:174.0px;width:1.0px;height:712.0px;background:repeating-linear-gradient(180deg,#b2b2b2 0,#b2b2b2 2px,transparent 2px,transparent 4px);"></div>
<div style="left:2063.0px;top:174.0px;width:1.0px;height:712.0px;background:repeating-linear-gradient(180deg,#b2b2b2 0,#b2b2b2 2px,transparent 2px,transparent 4px);"></div>
<div style="left:2089.0px;top:174.0px;width:1.0px;height:712.0px;background:#d4d4d4;"></div>
<div style="left:2116.0px;top:174.0px;width:1.0px;height:712.0px;background:repeating-linear-gradient(180deg,#b2b2b2 0,#b2b2b2 2px,transparent 2px,transparent 4px);"></div>
<div style="left:2142.0px;top:174.0px;width:1.0px;height:712.0px;background:repeating-linear-gradient(180deg,#b2b2b2 0,#b2b2b2 2px,transparent 2px,transparent 4px);"></div>
<div style="left:2168.0px;top:174.0px;width:1.0px;height:712.0px;background:repeating-linear-gradient(180deg,#b2b2b2 0,#b2b2b2 2px,transparent 2px,transparent 4px);"></div>
<div style="left:2194.0px;top:174.0px;width:1.0px;height:712.0px;background:#d4d4d4;"></div>
<div style="left:2221.0px;top:174.0px;width:1.0px;height:712.0px;background:repeating-linear-gradient(180deg,#b2b2b2 0,#b2b2b2 2px,transparent 2px,transparent 4px);"></div>
<div style="left:1562.0px;top:199.0px;width:685.0px;height:1.0px;background:repeating-linear-gradient(90deg,#aeaeae 0,#aeaeae 2px,transparent 2px,transparent 4px);"></div>
<div style="left:1562.0px;top:226.0px;width:685.0px;height:1.0px;background:#dadada;"></div>
<div style="left:1562.0px;top:252.0px;width:685.0px;height:1.0px;background:repeating-linear-gradient(90deg,#aeaeae 0,#aeaeae 2px,transparent 2px,transparent 4px);"></div>
<div style="left:1562.0px;top:278.0px;width:685.0px;height:1.0px;background:#dadada;"></div>
<div style="left:1562.0px;top:304.0px;width:685.0px;height:1.0px;background:repeating-linear-gradient(90deg,#aeaeae 0,#aeaeae 2px,transparent 2px,transparent 4px);"></div>
<div style="left:1562.0px;top:331.0px;width:685.0px;height:1.0px;background:#dadada;"></div>
<div style="left:1562.0px;top:357.0px;width:685.0px;height:1.0px;background:repeating-linear-gradient(90deg,#aeaeae 0,#aeaeae 2px,transparent 2px,transparent 4px);"></div>
<div style="left:1562.0px;top:383.0px;width:685.0px;height:1.0px;background:#dadada;"></div>
<div style="left:1562.0px;top:410.0px;width:685.0px;height:1.0px;background:repeating-linear-gradient(90deg,#aeaeae 0,#aeaeae 2px,transparent 2px,transparent 4px);"></div>
<div style="left:1562.0px;top:436.0px;width:685.0px;height:1.0px;background:#dadada;"></div>
<div style="left:1562.0px;top:462.0px;width:685.0px;height:1.0px;background:repeating-linear-gradient(90deg,#aeaeae 0,#aeaeae 2px,transparent 2px,transparent 4px);"></div>
<div style="left:1562.0px;top:488.0px;width:685.0px;height:1.0px;background:#dadada;"></div>
<div style="left:1562.0px;top:515.0px;width:685.0px;height:1.0px;background:repeating-linear-gradient(90deg,#aeaeae 0,#aeaeae 2px,transparent 2px,transparent 4px);"></div>
<div style="left:1562.0px;top:541.0px;width:685.0px;height:1.0px;background:#dadada;"></div>
<div style="left:1562.0px;top:567.0px;width:685.0px;height:1.0px;background:repeating-linear-gradient(90deg,#aeaeae 0,#aeaeae 2px,transparent 2px,transparent 4px);"></div>
<div style="left:1562.0px;top:594.0px;width:685.0px;height:1.0px;background:#dadada;"></div>
<div style="left:1562.0px;top:620.0px;width:685.0px;height:1.0px;background:repeating-linear-gradient(90deg,#aeaeae 0,#aeaeae 2px,transparent 2px,transparent 4px);"></div>
<div style="left:1562.0px;top:646.0px;width:685.0px;height:1.0px;background:#dadada;"></div>
<div style="left:1562.0px;top:673.0px;width:685.0px;height:1.0px;background:repeating-linear-gradient(90deg,#aeaeae 0,#aeaeae 2px,transparent 2px,transparent 4px);"></div>
<div style="left:1562.0px;top:699.0px;width:685.0px;height:1.0px;background:#dadada;"></div>
<div style="left:1562.0px;top:725.0px;width:685.0px;height:1.0px;background:repeating-linear-gradient(90deg,#aeaeae 0,#aeaeae 2px,transparent 2px,transparent 4px);"></div>
<div style="left:1562.0px;top:752.0px;width:685.0px;height:1.0px;background:#dadada;"></div>
<div style="left:1562.0px;top:778.0px;width:685.0px;height:1.0px;background:repeating-linear-gradient(90deg,#aeaeae 0,#aeaeae 2px,transparent 2px,transparent 4px);"></div>
<div style="left:1562.0px;top:804.0px;width:685.0px;height:1.0px;background:#dadada;"></div>
<div style="left:1562.0px;top:830.0px;width:685.0px;height:1.0px;background:repeating-linear-gradient(90deg,#aeaeae 0,#aeaeae 2px,transparent 2px,transparent 4px);"></div>
<div style="left:1562.0px;top:857.0px;width:685.0px;height:1.0px;background:#dadada;"></div>
<div style="left:1562.0px;top:883.0px;width:685.0px;height:1.0px;background:repeating-linear-gradient(90deg,#aeaeae 0,#aeaeae 2px,transparent 2px,transparent 4px);"></div>
<div style="left:2247.0px;top:174.0px;width:692.0px;height:712.0px;background:#c0c0c0;"></div>
<div style="left:2939.0px;top:174.0px;width:17.5px;height:712.0px;background:#fdfdf8;"></div>
<div style="left:2939.8px;top:174.2px;width:16.0px;height:16.4px;background:linear-gradient(90deg,#cfdcfa,#bccbf4);border:1px solid #eef2fc;border-radius:2px;box-shadow:0 0 0 .5px #9fb0dc;"></div>
<svg style="left:2939.8px;top:174.2px" width="16.0" height="16.4" viewBox="0 0 16.0 16.4"><path d="M4.5 10.0L8.0 6.4L11.5 10.0" stroke="#3a55a0" stroke-width="2.100" fill="none"/></svg>
<div style="left:2939.8px;top:869.4px;width:16.0px;height:16.2px;background:linear-gradient(90deg,#cfdcfa,#bccbf4);border:1px solid #eef2fc;border-radius:2px;box-shadow:0 0 0 .5px #9fb0dc;"></div>
<svg style="left:2939.8px;top:869.4px" width="16.0" height="16.2" viewBox="0 0 16.0 16.2"><path d="M4.5 6.3L8.0 9.9L11.5 6.3" stroke="#3a55a0" stroke-width="2.100" fill="none"/></svg>
<div style="left:2939.8px;top:192.0px;width:16.0px;height:508.5px;background:linear-gradient(90deg,#cddafa,#bccbf4);border:1px solid #eef2fc;border-radius:2px;box-shadow:0 0 0 .5px #9fb0dc;"></div>
<div style="left:2944.0px;top:441.0px;width:7.5px;height:1.0px;background:#eef3fe;"></div>
<div style="left:2944.0px;top:443.2px;width:7.5px;height:1.0px;background:#eef3fe;"></div>
<div style="left:2944.0px;top:445.4px;width:7.5px;height:1.0px;background:#eef3fe;"></div>
<div style="left:2944.0px;top:447.6px;width:7.5px;height:1.0px;background:#eef3fe;"></div>
<div style="left:1561.8px;top:886.8px;width:1377.2px;height:17.0px;background:linear-gradient(#fdfdf8,#f7f6ee);"></div>
<div style="left:2939.0px;top:886.0px;width:17.5px;height:18.0px;background:#ece9d8;"></div>
<div style="left:1564.6px;top:888.0px;width:15.4px;height:13.6px;background:linear-gradient(90deg,#cfdcfa,#bccbf4);border:1px solid #eef2fc;border-radius:2px;box-shadow:0 0 0 .5px #9fb0dc;"></div>
<svg style="left:1564.6px;top:888.0px" width="15.4" height="13.6" viewBox="0 0 15.4 13.6"><path d="M9.5 3.3L5.9 6.8L9.5 10.3" stroke="#3a55a0" stroke-width="2.100" fill="none"/></svg>
<div style="left:2922.0px;top:888.0px;width:15.4px;height:13.6px;background:linear-gradient(90deg,#cfdcfa,#bccbf4);border:1px solid #eef2fc;border-radius:2px;box-shadow:0 0 0 .5px #9fb0dc;"></div>
<svg style="left:2922.0px;top:888.0px" width="15.4" height="13.6" viewBox="0 0 15.4 13.6"><path d="M5.9 3.3L9.5 6.8L5.9 10.3" stroke="#3a55a0" stroke-width="2.100" fill="none"/></svg>
<div style="left:1562.6px;top:121.2px;width:20.6px;height:20.4px;border:1px solid #9fb0d4;border-radius:3px;background:#f6f5ee;box-shadow:inset -1px -1px 0 #d0cdbc;"></div>
<svg style="left:1565.0px;top:122.5px" width="17" height="18" viewBox="0 0 17 18"><path d="M1.500 1h9l3.500 3.500v12h-12.500z" fill="#e9e6f6" stroke="#4a3e9a" stroke-width="1.200"/><rect x="3" y="3" width="3" height="3" fill="none" stroke="#4a3e9a"/><path d="M7.500 3v4h3.500" stroke="#4a3e9a" fill="none"/><rect x="3" y="9" width="9.500" height="5.500" fill="#8f9ee0"/><path d="M3 11.500h9.500M6 9v5.500M9 9v5.500" stroke="#e9e6f6" stroke-width=".8"/></svg>
<svg style="left:1593.0px;top:122.5px" width="17" height="18" viewBox="0 0 17 18"><path d="M4 2h7l1.500 5h-10z" fill="#f4f4f4" stroke="#8a8a98"/><ellipse cx="8" cy="11" rx="7" ry="4.500" fill="#c9c9d4" stroke="#77778a"/><ellipse cx="11.500" cy="12.500" rx="3" ry="2" fill="#48a848"/><path d="M2 9q6-3 12 0" stroke="#eee" fill="none"/></svg>
<svg style="left:1614.0px;top:122.5px" width="17" height="18" viewBox="0 0 17 18"><path d="M4 1h8l3.500 3.500v12.500h-11.500z" fill="#f8f8f8" stroke="#a8a8a8"/><rect x="0.500" y="3" width="9" height="4" fill="#d02020"/><path d="M7 15q1-7 2-7.500t0 3.500q-2 3.500 5 2.500" stroke="#d03030" stroke-width="1.200" fill="none"/></svg>
<div style="left:1637.0px;top:122.5px;width:1.0px;height:18.0px;background:#c9c6b4;"></div>
<svg style="left:1645.0px;top:122.5px" width="14" height="18" viewBox="0 0 14 18"><path d="M2 1.500v12l3-3 2.500 5.500 2-1-2.500-5.500h4.500z" fill="#f4f2ff" stroke="#4a3e9a" stroke-width="1.300"/></svg>
<div style="left:1664.3px;top:121.2px;width:19.9px;height:20.4px;border:1px solid #9fb0d4;border-radius:3px;background:#fbfbf8;box-shadow:inset -1px -1px 0 #d0cdbc;"></div>
<svg style="left:1666.5px;top:122.5px" width="17" height="18" viewBox="0 0 17 18"><path d="M1.500 1v15.500h14.500" stroke="#222" stroke-width="1.400" fill="none"/><g fill="#4a3e9a"><circle cx="5" cy="11" r="1.200"/><circle cx="7" cy="8" r="1.200"/><circle cx="6.500" cy="12.500" r="1"/><circle cx="8.500" cy="10.500" r="1.200"/><circle cx="9" cy="6" r="1"/><circle cx="11" cy="4" r="1.300"/><circle cx="12.500" cy="2.500" r="1.200"/><circle cx="13.500" cy="5" r="1"/><circle cx="10.500" cy="12" r=".9"/><circle cx="4" cy="14" r=".9"/><circle cx="6" cy="5" r=".8"/></g></svg>
<svg style="left:1687.0px;top:122.5px" width="17" height="18" viewBox="0 0 17 18"><path d="M1.500 1v15.500h14.500" stroke="#222" stroke-width="1.400" fill="none"/><ellipse cx="9" cy="8" rx="6" ry="6" fill="#b9bce4" stroke="#4a3e9a"/><ellipse cx="9" cy="8" rx="3.800" ry="3.800" fill="#9da2d8" stroke="#4a3e9a"/><ellipse cx="9" cy="8" rx="1.700" ry="1.700" fill="#7a80c4" stroke="#4a3e9a"/></svg>
<svg style="left:1708.5px;top:122.5px" width="17" height="18" viewBox="0 0 17 18"><path d="M1.500 1v15.500h15" stroke="#222" stroke-width="1.400" fill="none"/><path d="M2.500 16l3-7 2 5 3.500-12.500 3.500 14.500z" fill="#a9aee0" stroke="#4a3e9a" stroke-width="1.100"/></svg>
<svg style="left:1730.5px;top:122.5px" width="17" height="18" viewBox="0 0 17 18"><circle cx="10" cy="7" r="5.400" fill="#f6f8ff" stroke="#4a3e9a" stroke-width="1.700"/><path d="M7 7h6" stroke="#222" stroke-width="1.800"/><path d="M10 4v6" stroke="#222" stroke-width="1.800"/><path d="M6 11L1.500 16" stroke="#e08a28" stroke-width="2.600" stroke-linecap="round"/></svg>
<svg style="left:1752.0px;top:122.5px" width="17" height="18" viewBox="0 0 17 18"><circle cx="10" cy="7" r="5.400" fill="#f6f8ff" stroke="#4a3e9a" stroke-width="1.700"/><path d="M7 7h6" stroke="#222" stroke-width="1.800"/><path d="M6 11L1.500 16" stroke="#e08a28" stroke-width="2.600" stroke-linecap="round"/></svg>
<svg style="left:1773.0px;top:122.5px" width="17" height="18" viewBox="0 0 17 18"><rect x="0.500" y="7.500" width="8" height="8" fill="none" stroke="#888" stroke-dasharray="1.500 1"/><rect x="4.500" y="2.500" width="12" height="9" fill="#aeb3e2" stroke="#4a3e9a"/><path d="M10.500 5h4v3.500z" fill="#222"/></svg>
<svg style="left:1794.0px;top:122.5px" width="17" height="18" viewBox="0 0 17 18"><rect x="5.500" y="1.500" width="11" height="9" fill="none" stroke="#444" stroke-dasharray="1.500 1.200"/><rect x="0.800" y="8.500" width="6" height="7" fill="#d5d8f2" stroke="#4a3e9a"/><path d="M8.500 8.500l4-3.500v3.500z" fill="#222"/></svg>
<div style="left:1817.0px;top:122.5px;width:1.0px;height:18.0px;background:#c9c6b4;"></div>
<svg style="left:1823.0px;top:122.5px" width="17" height="18" viewBox="0 0 17 18"><path d="M2 14q0-10 12-11l-3 6z" fill="#b4b8e4" stroke="#555a88" stroke-dasharray="2 1"/><path d="M5 14h9" stroke="#555a88" stroke-dasharray="2 1"/><path d="M6 12l5-4" stroke="#4a3e9a" stroke-width="1.500"/></svg>
<svg style="left:1845.0px;top:122.5px" width="17" height="18" viewBox="0 0 17 18"><text x="0" y="11" font-family="Liberation Sans" font-weight="bold" font-size="14" fill="#1a48a8">S</text><path d="M11 1v6M8 4h6" stroke="#222" stroke-width="1.400"/><path d="M7 9l6 6M3 16h10" stroke="#555a88" stroke-dasharray="2 1"/></svg>
<svg style="left:1867.0px;top:122.5px" width="17" height="18" viewBox="0 0 17 18"><path d="M2 15q0-10 10-10l-2 7z" fill="#b4b8e4" stroke="#555a88" stroke-dasharray="2 1"/><path d="M13 0.500v6M10 3.500h6" stroke="#222" stroke-width="1.400"/><path d="M5 13l6-5" stroke="#4a3e9a" stroke-width="1.500"/></svg>
<svg style="left:1888.5px;top:122.5px" width="17" height="18" viewBox="0 0 17 18"><rect x="1.500" y="4.500" width="11" height="11" fill="#b4b8e4" stroke="#333" stroke-width="1.600" stroke-dasharray="3.500 1.500"/><path d="M14 0.500v6M11 3.500h6" stroke="#222" stroke-width="1.400"/></svg>
<svg style="left:1910.5px;top:122.5px" width="17" height="18" viewBox="0 0 17 18"><rect x="1" y="1.500" width="14" height="14" fill="#eceef8" stroke="#222" stroke-width="1.700"/><path d="M7 1.500v14M1 9.500h14" stroke="#222" stroke-width="1.700"/></svg>
<svg style="left:1932.0px;top:122.5px" width="17" height="18" viewBox="0 0 17 18"><rect x="1" y="1.500" width="14.500" height="14" fill="#c9cdee" stroke="#333" stroke-width="1.500" stroke-dasharray="3.500 1.500"/><rect x="1" y="6" width="14.500" height="5" fill="#f6f6fb"/><path d="M1 6h14.500M1 11h14.500" stroke="#222" stroke-width="1.600"/></svg>
<svg style="left:1953.0px;top:122.5px" width="17" height="18" viewBox="0 0 17 18"><rect x="0.500" y="1" width="16" height="16" fill="#c1c5ea"/><path d="M2 3v12M15 3v12" stroke="#222" stroke-width="1.600"/><path d="M2 9h13" stroke="#222"/><path d="M8.500 6v6M5.500 9h6" stroke="#e0182a" stroke-width="1.800"/></svg>
<svg style="left:1974.0px;top:122.5px" width="17" height="18" viewBox="0 0 17 18"><rect x="0.500" y="1" width="16.500" height="16" fill="#c8cbee"/><text x="0" y="14" font-family="Liberation Sans" font-weight="bold" font-size="16" fill="#1a48a8">S</text><path d="M11 2v6M8.500 5h5" stroke="#e0182a" stroke-width="1.600"/><path d="M15.500 2v14" stroke="#222" stroke-width="1.500"/></svg>
<div style="left:1996.0px;top:131.5px;width:4.0px;height:1.0px;background:#c9c6b4;"></div>
<svg style="left:2005.0px;top:122.5px" width="15" height="18" viewBox="0 0 15 18"><path d="M1.500 2.500l8 8" stroke="#1c2460" stroke-width="2.200"/><path d="M13.500 14.500l-7-2 5-5z" fill="#1c2460"/></svg>
<svg style="left:2026.0px;top:122.5px" width="15" height="18" viewBox="0 0 15 18"><path d="M1.500 2.500l12.500 13" stroke="#1c2460" stroke-width="1.800"/></svg>
<svg style="left:2046.0px;top:122.5px" width="17" height="18" viewBox="0 0 17 18"><rect x="0.500" y="1.500" width="16" height="14" fill="#b9bde8" stroke="#8a8fd0"/><rect x="2" y="3" width="9" height="9" fill="#eceefb"/><text x="2.800" y="11" font-family="Liberation Sans" font-weight="bold" font-size="10" fill="#1a1a60">A</text><path d="M12 5h4M12 8h4M12 11h4M2 13.500h14" stroke="#e8eafa"/></svg>
<div style="left:2070.0px;top:122.5px;width:1.0px;height:18.0px;background:#c9c6b4;"></div>
<svg style="left:2077.0px;top:122.5px" width="15" height="18" viewBox="0 0 15 18"><path d="M2 1v16" stroke="#a3a29a" stroke-width="2"/><rect x="4" y="2.500" width="8" height="4.500" fill="#a3a29a"/><rect x="4" y="10" width="5" height="4.500" fill="#a3a29a"/><path d="M3 9h11" stroke="#a3a29a"/></svg>
<svg style="left:2099.0px;top:122.5px" width="15" height="18" viewBox="0 0 15 18"><path d="M13 1v16" stroke="#a3a29a" stroke-width="2"/><rect x="3" y="2.500" width="8" height="4.500" fill="#a3a29a"/><rect x="6" y="10" width="5" height="4.500" fill="#a3a29a"/><path d="M1 9h11" stroke="#a3a29a"/></svg>
<svg style="left:2120.0px;top:122.5px" width="16" height="18" viewBox="0 0 16 18"><path d="M0.500 3h15" stroke="#a3a29a" stroke-width="2"/><rect x="2" y="5" width="4.500" height="8" fill="#a3a29a"/><rect x="8.500" y="5" width="4.500" height="5" fill="#a3a29a"/><path d="M14.500 5v9" stroke="#a3a29a"/></svg>
<svg style="left:2141.5px;top:122.5px" width="16" height="18" viewBox="0 0 16 18"><path d="M0.500 15h15" stroke="#a3a29a" stroke-width="2"/><rect x="2" y="7" width="4.500" height="6.500" fill="#a3a29a"/><rect x="8.500" y="3.500" width="4.500" height="10" fill="#a3a29a"/><path d="M14.500 5v9" stroke="#a3a29a"/></svg>
<div style="left:2164.5px;top:122.5px;width:1.0px;height:18.0px;background:#c9c6b4;"></div>
<svg style="left:2171.0px;top:122.5px" width="16" height="18" viewBox="0 0 16 18"><path d="M0.500 10h15" stroke="#a3a29a" stroke-width="1.500"/><rect x="3" y="4" width="10" height="5" fill="#a3a29a"/><rect x="5" y="11" width="6" height="3" fill="#a3a29a"/><path d="M2 15.500h12" stroke="#a3a29a"/></svg>
<svg style="left:2193.5px;top:122.5px" width="16" height="18" viewBox="0 0 16 18"><path d="M8 1v16" stroke="#a3a29a" stroke-width="1.500"/><rect x="3" y="4" width="10" height="9" fill="#a3a29a"/><path d="M1 8.500h14" stroke="#a3a29a"/></svg>
<svg style="left:2214.0px;top:122.5px" width="16" height="18" viewBox="0 0 16 18"><rect x="1" y="2.0" width="3.500" height="3.500" fill="#a3a29a"/><rect x="1" y="7.5" width="3.500" height="3.500" fill="#a3a29a"/><rect x="1" y="13.0" width="3.500" height="3.500" fill="#a3a29a"/><rect x="6" y="2.0" width="3.500" height="3.500" fill="#a3a29a"/><rect x="6" y="7.5" width="3.500" height="3.500" fill="#a3a29a"/><rect x="6" y="13.0" width="3.500" height="3.500" fill="#a3a29a"/><rect x="11" y="2.0" width="3.500" height="3.500" fill="#a3a29a"/><rect x="11" y="7.5" width="3.500" height="3.500" fill="#a3a29a"/><rect x="11" y="13.0" width="3.500" height="3.500" fill="#a3a29a"/><path d="M7.800 1v16" stroke="#a3a29a"/></svg>
<div style="left:2233.5px;top:121.2px;width:20.7px;height:20.4px;border:1px solid #9fb0d4;border-radius:3px;background:#fff;box-shadow:inset -1px -1px 0 #d0cdbc;"></div>
<svg style="left:2236.0px;top:122.5px" width="17" height="18" viewBox="0 0 17 18"><path d="M2.5 1v16M0.500 3.0h16" stroke="#4a2a9a" stroke-width="1.300"/><path d="M6.1 1v16M0.500 6.6h16" stroke="#4a2a9a" stroke-width="1.300"/><path d="M9.7 1v16M0.500 10.2h16" stroke="#4a2a9a" stroke-width="1.300"/><path d="M13.3 1v16M0.500 13.8h16" stroke="#4a2a9a" stroke-width="1.300"/></svg>
<svg style="left:2257.5px;top:122.5px" width="17" height="18" viewBox="0 0 17 18"><rect x="4" y="3" width="8" height="8" fill="#38b0b8"/><path d="M2.5 1v16M0.500 3.0h16" stroke="#5a1a6a" stroke-width="1.200"/><path d="M6.1 1v16M0.500 6.6h16" stroke="#5a1a6a" stroke-width="1.200"/><path d="M9.7 1v16M0.500 10.2h16" stroke="#5a1a6a" stroke-width="1.200"/><path d="M13.3 1v16M0.500 13.8h16" stroke="#5a1a6a" stroke-width="1.200"/><path d="M12 11l3 3" stroke="#111" stroke-width="2"/></svg>
<div style="left:2281.0px;top:131.5px;width:4.0px;height:1.0px;background:#d4d1c0;"></div>
<div style="left:1351.5px;top:856.0px;width:176.7px;height:68.8px;background:#6c87ce;border-radius:7px 7px 0 0;"></div>
<div style="left:1351.5px;top:856.0px;width:176.7px;height:29.2px;border-radius:7px 7px 0 0;background:linear-gradient(#86a6e2 0%,#7c9cdc 12%,#6f91d4 50%,#6a8ace 100%);"></div>
<div style="left:1354.8px;top:885.2px;width:170.4px;height:36.8px;background:#ece9d8;"></div>
<span class="t" style="top:863.5px;font-size:14.5px;line-height:18.5px;color:#dde7fa;font-weight:bold;left:1358.2px;transform:scaleX(0.911);transform-origin:0 50%;">zheng ya dan&nbsp; (bo s…</span>
<div style="left:1501.8px;top:861.7px;width:20.5px;height:19.5px;border:1px solid #c9b4d4;border-radius:3.5px;background:linear-gradient(135deg,#c8788e,#b85070 50%,#ae4868);"></div>
<svg style="left:1501.8px;top:861.7px" width="20.5" height="19.5" viewBox="0 0 20.5 19.5"><path d="M5.7 5.5L14.8 14.0M14.8 5.5L5.7 14.0" stroke="#fff" stroke-width="2.3" stroke-linecap="round"/></svg>
<span class="t" style="top:893.3px;font-size:16px;line-height:18.0px;font-weight:bold;left:1360.1px;transform:scaleX(0.882);transform-origin:0 50%;">15:02:06 ~ 16:28:57</span>
<div style="left:1499.8px;top:895.3px;width:15.7px;height:14.3px;background:linear-gradient(#e0383c,#c4181c);border-radius:2.500px;border:1px solid #b01418;"></div>
<svg style="left:1500.8px;top:895.8px" width="14" height="13.5" viewBox="0 0 14 13.5"><path d="M4.600 3.600a4 4 0 1 0 4.800 0" stroke="#fff" stroke-width="1.700" fill="none"/><path d="M7 1.800v5" stroke="#fff" stroke-width="1.700"/></svg>
</div></body></html>
